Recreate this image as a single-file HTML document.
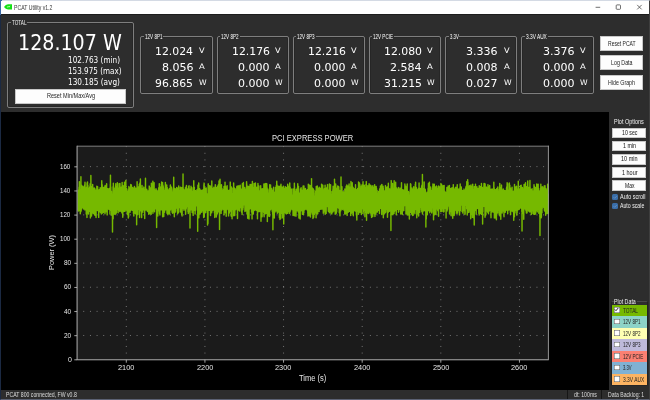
<!DOCTYPE html><html><head><meta charset="utf-8"><title>PCAT Utility v1.2</title><style>
html,body{margin:0;padding:0;}
body{width:650px;height:400px;background:#000;position:relative;overflow:hidden;font-family:"Liberation Sans", sans-serif;}
#app{position:absolute;left:0;top:0;width:650px;height:400px;will-change:transform;}
.abs{position:absolute;display:block}
.titlebar{position:absolute;left:0;top:0;width:650px;height:14px;background:#fff;}
.toppanel{position:absolute;left:0;top:14px;width:650px;height:98.2px;background:#2d2d2d;border-top:1px solid #1c1c1c;box-sizing:border-box}
.rightpanel{position:absolute;left:609.3px;top:112px;width:41px;height:277.5px;background:#2d2d2d;}
.status{position:absolute;left:0;top:390.4px;width:650px;height:9.6px;background:#2d2d2d;}
.sdiv{position:absolute;top:390.4px;width:1px;height:8.4px;background:#161616}
.gb{position:absolute;box-sizing:border-box;border:1px solid #7e7e7e;border-radius:2px;box-shadow:inset 0 0 0 0.6px #222;}
.gb2{border-color:#4a4a4a #222 #262626 #222;box-shadow:none}
.gbl{position:absolute;background:#2d2d2d;}
.btn{position:absolute;box-sizing:border-box;background:#fdfdfd;border:0.5px solid #c8c8c8;}
.btn.sm{}
.cb{position:absolute;width:6.5px;height:6.2px;border-radius:1.5px;background:#3a6ea8;}
.row{position:absolute;left:612.4px;width:34.7px;height:11.55px;}
.ck{position:absolute;left:2px;top:2.7px;width:5.5px;height:5.5px;background:#fff;box-shadow:inset 0 0 0 0.5px #555}
.ck svg{position:absolute;left:0;top:0}
.t{position:absolute;white-space:pre;line-height:1;transform-origin:0 0;}
.frame{position:absolute;left:0;top:0;width:650px;height:400px;box-sizing:border-box;border-left:1px solid #1b2942;border-top:1px solid #d4dae4;border-right:1px solid #3e3e3e;border-bottom:1.5px solid #5c6274;pointer-events:none}
.frame:before{content:'';position:absolute;left:-1px;top:-1px;width:1px;height:15px;background:#3a68a6}
.frame:after{content:'';position:absolute;left:-1px;top:-1px;width:2.2px;height:2.2px;background:linear-gradient(135deg,#3a68a6 50%,transparent 50%)}
</style></head><body><div id="app">
<div class="titlebar"></div>
<svg class="abs" style="left:3px;top:3px" width="10" height="8" viewBox="3 3 10 8"><path d="M4 6.9 Q5.6 4.5 8 4.3 L12 4.3 L12 9.5 L8 9.5 Q5.6 9.2 4 6.9 Z" fill="#14e014"/><path d="M6.6 6.9 Q7.8 5.8 9.3 6.8 Q8 8.1 6.6 6.9Z M8.4 6.2 L10.3 5.7 L9.6 7.4Z" fill="#c8ffc0" opacity=".85"/></svg>
<svg class="abs" style="left:590px;top:1px" width="58" height="13" viewBox="0 0 58 13"><path d="M5.6 6.3 H10.2" stroke="#333" stroke-width="0.7" fill="none"/><rect x="26.2" y="3.9" width="4.3" height="4.4" rx="0.8" stroke="#333" stroke-width="0.7" fill="none"/><path d="M47.2 3.9 L51.7 8.4 M51.7 3.9 L47.2 8.4" stroke="#333" stroke-width="0.7" fill="none"/></svg>
<div class="toppanel"></div>
<div class="gb" style="left:7px;top:22px;width:127.25px;height:85.5px"></div>
<div class="gbl" style="left:10.5px;top:19px;width:16.5px;height:7px"></div>
<div class="btn" style="left:15px;top:88.5px;width:111px;height:15px"></div>
<div class="gb" style="left:140.40px;top:36.0px;width:72.4px;height:57.5px"></div>
<div class="gbl" style="left:143.90px;top:33px;width:19.5px;height:7px"></div>
<div class="gb" style="left:216.57px;top:36.0px;width:72.4px;height:57.5px"></div>
<div class="gbl" style="left:220.07px;top:33px;width:19.5px;height:7px"></div>
<div class="gb" style="left:292.74px;top:36.0px;width:72.4px;height:57.5px"></div>
<div class="gbl" style="left:296.24px;top:33px;width:19.5px;height:7px"></div>
<div class="gb" style="left:368.91px;top:36.0px;width:72.4px;height:57.5px"></div>
<div class="gbl" style="left:372.41px;top:33px;width:22.0px;height:7px"></div>
<div class="gb" style="left:445.08px;top:36.0px;width:72.4px;height:57.5px"></div>
<div class="gbl" style="left:448.58px;top:33px;width:10.8px;height:7px"></div>
<div class="gb" style="left:521.25px;top:36.0px;width:72.4px;height:57.5px"></div>
<div class="gbl" style="left:524.75px;top:33px;width:22.8px;height:7px"></div>
<div class="btn" style="left:599.8px;top:35.8px;width:43.4px;height:15.1px"></div>
<div class="btn" style="left:599.8px;top:55.3px;width:43.4px;height:15.1px"></div>
<div class="btn" style="left:599.8px;top:74.8px;width:43.4px;height:15.1px"></div>
<svg class="abs" style="left:0;top:112px" width="609" height="278" viewBox="0 112 609 278"><rect x="77.6" y="146.7" width="471.1" height="213.60000000000002" fill="#1b1b1b"/><path d="M83.3 335.48 H547.7" stroke="#9a9a9a" stroke-width="0.8" stroke-dasharray="0.9 5.765" fill="none"/><path d="M83.3 311.36 H547.7" stroke="#9a9a9a" stroke-width="0.8" stroke-dasharray="0.9 5.765" fill="none"/><path d="M83.3 287.24 H547.7" stroke="#9a9a9a" stroke-width="0.8" stroke-dasharray="0.9 5.765" fill="none"/><path d="M83.3 263.12 H547.7" stroke="#9a9a9a" stroke-width="0.8" stroke-dasharray="0.9 5.765" fill="none"/><path d="M83.3 239.00 H547.7" stroke="#9a9a9a" stroke-width="0.8" stroke-dasharray="0.9 5.765" fill="none"/><path d="M83.3 214.88 H547.7" stroke="#9a9a9a" stroke-width="0.8" stroke-dasharray="0.9 5.765" fill="none"/><path d="M83.3 190.76 H547.7" stroke="#9a9a9a" stroke-width="0.8" stroke-dasharray="0.9 5.765" fill="none"/><path d="M83.3 166.64 H547.7" stroke="#9a9a9a" stroke-width="0.8" stroke-dasharray="0.9 5.765" fill="none"/><path d="M126.30 146.15 V359.3" stroke="#9a9a9a" stroke-width="0.8" stroke-dasharray="0.9 5.76" fill="none"/><path d="M204.93 146.15 V359.3" stroke="#9a9a9a" stroke-width="0.8" stroke-dasharray="0.9 5.76" fill="none"/><path d="M283.56 146.15 V359.3" stroke="#9a9a9a" stroke-width="0.8" stroke-dasharray="0.9 5.76" fill="none"/><path d="M362.19 146.15 V359.3" stroke="#9a9a9a" stroke-width="0.8" stroke-dasharray="0.9 5.76" fill="none"/><path d="M440.82 146.15 V359.3" stroke="#9a9a9a" stroke-width="0.8" stroke-dasharray="0.9 5.76" fill="none"/><path d="M519.45 146.15 V359.3" stroke="#9a9a9a" stroke-width="0.8" stroke-dasharray="0.9 5.76" fill="none"/><path d="M78.10 210.4L78.18 196.3L78.26 190.6L78.34 205.2L78.41 211.0L78.49 201.0L78.57 195.3L78.65 190.0L78.73 210.4L78.81 210.8L78.88 192.8L78.96 195.3L79.04 187.3L79.12 190.7L79.20 201.4L79.28 203.0L79.35 181.6L79.43 203.1L79.51 207.7L79.59 209.9L79.67 199.4L79.75 198.8L79.82 203.6L79.90 201.0L79.98 197.5L80.06 193.0L80.14 190.0L80.22 198.1L80.29 213.8L80.37 192.9L80.45 211.6L80.53 202.0L80.61 211.9L80.69 200.4L80.76 207.6L80.84 198.1L80.92 176.8L81.00 200.9L81.08 191.5L81.16 211.0L81.23 203.1L81.31 193.3L81.39 201.3L81.47 196.4L81.55 199.3L81.63 209.1L81.70 194.3L81.78 207.9L81.86 185.4L81.94 205.1L82.02 193.0L82.10 200.4L82.17 190.8L82.25 206.0L82.33 190.6L82.41 201.6L82.49 189.0L82.57 193.7L82.65 198.9L82.72 207.6L82.80 192.1L82.88 195.4L82.96 186.7L83.04 203.9L83.12 194.4L83.19 194.9L83.27 197.4L83.35 198.2L83.43 198.4L83.51 206.0L83.59 209.1L83.66 204.1L83.74 194.0L83.82 187.5L83.90 190.7L83.98 190.2L84.06 192.0L84.13 192.9L84.21 198.4L84.29 192.1L84.37 186.0L84.45 203.4L84.53 206.8L84.60 184.9L84.68 197.8L84.76 190.7L84.84 191.3L84.92 209.9L85.00 182.3L85.07 186.0L85.15 198.5L85.23 192.3L85.31 199.0L85.39 208.4L85.47 201.4L85.54 196.4L85.62 189.9L85.70 192.8L85.78 199.8L85.86 188.4L85.94 207.5L86.01 191.9L86.09 189.9L86.17 203.1L86.25 213.9L86.33 208.5L86.41 197.9L86.48 194.7L86.56 187.2L86.64 209.1L86.72 200.4L86.80 193.4L86.88 201.9L86.96 217.4L87.03 191.7L87.11 183.0L87.19 190.5L87.27 208.6L87.35 204.2L87.43 198.0L87.50 182.0L87.58 193.8L87.66 199.2L87.74 187.2L87.82 201.2L87.90 185.5L87.97 206.8L88.05 204.8L88.13 192.6L88.21 188.0L88.29 193.4L88.37 197.2L88.44 214.0L88.52 207.0L88.60 206.1L88.68 205.4L88.76 194.1L88.84 203.5L88.91 191.9L88.99 199.5L89.07 203.5L89.15 199.1L89.23 195.8L89.31 191.4L89.38 204.8L89.46 202.6L89.54 211.3L89.62 186.9L89.70 187.8L89.78 202.1L89.85 204.8L89.93 210.5L90.01 198.6L90.09 198.2L90.17 183.7L90.25 197.8L90.32 207.6L90.40 217.9L90.48 188.1L90.56 198.4L90.64 212.7L90.72 198.5L90.79 212.7L90.87 175.5L90.95 189.8L91.03 194.2L91.11 202.0L91.19 216.0L91.26 201.6L91.34 212.4L91.42 194.0L91.50 216.0L91.58 208.5L91.66 189.2L91.74 186.7L91.81 210.1L91.89 212.3L91.97 191.3L92.05 191.4L92.13 209.0L92.21 206.8L92.28 206.8L92.36 210.2L92.44 206.7L92.52 189.0L92.60 193.0L92.68 184.4L92.75 201.2L92.83 201.7L92.91 208.9L92.99 201.6L93.07 210.9L93.15 213.8L93.22 192.9L93.30 187.9L93.38 191.5L93.46 188.6L93.54 197.7L93.62 207.1L93.69 199.5L93.77 203.9L93.85 209.7L93.93 213.2L94.01 212.0L94.09 200.5L94.16 198.8L94.24 204.8L94.32 188.0L94.40 198.5L94.48 194.1L94.56 189.2L94.63 208.0L94.71 215.0L94.79 192.3L94.87 206.8L94.95 188.7L95.03 196.8L95.10 190.5L95.18 192.2L95.26 215.6L95.34 192.7L95.42 206.6L95.50 207.4L95.57 204.4L95.65 192.1L95.73 191.3L95.81 190.5L95.89 213.0L95.97 205.9L96.05 217.5L96.12 201.4L96.20 193.9L96.28 207.5L96.36 197.8L96.44 197.9L96.52 190.5L96.59 208.0L96.67 208.0L96.75 207.5L96.83 186.1L96.91 190.0L96.99 201.6L97.06 198.0L97.14 199.2L97.22 198.2L97.30 202.3L97.38 203.5L97.46 210.6L97.53 206.4L97.61 186.6L97.69 194.6L97.77 199.7L97.85 202.4L97.93 199.7L98.00 196.6L98.08 206.4L98.16 198.3L98.24 197.8L98.32 207.3L98.40 207.7L98.47 209.0L98.55 209.4L98.63 191.2L98.71 217.4L98.79 202.9L98.87 206.1L98.94 206.2L99.02 199.4L99.10 189.8L99.18 199.6L99.26 201.7L99.34 206.1L99.41 201.6L99.49 191.1L99.57 204.1L99.65 209.9L99.73 210.7L99.81 209.7L99.88 211.4L99.96 190.0L100.04 196.6L100.12 202.6L100.20 187.8L100.28 206.5L100.36 192.3L100.43 191.8L100.51 212.4L100.59 212.4L100.67 208.6L100.75 191.1L100.83 188.8L100.90 210.4L100.98 190.3L101.06 204.0L101.14 204.1L101.22 205.5L101.30 203.4L101.37 214.0L101.45 209.1L101.53 210.5L101.61 195.1L101.69 184.2L101.77 180.7L101.84 203.5L101.92 213.4L102.00 204.2L102.08 208.7L102.16 184.8L102.24 194.3L102.31 207.2L102.39 190.9L102.47 194.6L102.55 212.8L102.63 205.3L102.71 202.6L102.78 200.2L102.86 199.0L102.94 203.6L103.02 198.4L103.10 205.8L103.18 208.4L103.25 187.4L103.33 196.5L103.41 195.7L103.49 212.6L103.57 201.9L103.65 191.6L103.72 210.8L103.80 190.0L103.88 204.0L103.96 196.1L104.04 201.6L104.12 198.1L104.19 189.3L104.27 204.1L104.35 187.2L104.43 207.7L104.51 208.6L104.59 192.8L104.67 209.5L104.74 203.8L104.82 191.1L104.90 189.3L104.98 213.8L105.06 195.0L105.14 185.4L105.21 189.4L105.29 202.6L105.37 206.0L105.45 203.2L105.53 210.0L105.61 202.9L105.68 202.1L105.76 201.8L105.84 189.5L105.92 202.5L106.00 211.8L106.08 190.2L106.15 209.5L106.23 204.6L106.31 201.6L106.39 203.6L106.47 209.1L106.55 202.7L106.62 183.7L106.70 206.0L106.78 201.7L106.86 189.8L106.94 192.4L107.02 192.2L107.09 191.4L107.17 214.9L107.25 208.2L107.33 199.0L107.41 195.0L107.49 188.8L107.56 195.4L107.64 202.6L107.72 200.0L107.80 202.4L107.88 197.7L107.96 193.1L108.03 203.6L108.11 207.9L108.19 208.2L108.27 190.0L108.35 188.9L108.43 190.6L108.50 191.4L108.58 191.6L108.66 200.4L108.74 193.3L108.82 209.4L108.90 202.3L108.98 207.2L109.05 192.6L109.13 205.8L109.21 201.4L109.29 196.1L109.37 188.4L109.45 207.8L109.52 208.7L109.60 191.7L109.68 209.7L109.76 195.5L109.84 205.7L109.92 201.4L109.99 214.0L110.07 192.7L110.15 205.0L110.23 208.4L110.31 184.3L110.39 192.7L110.46 175.3L110.54 196.0L110.62 203.6L110.70 199.2L110.78 186.9L110.86 200.7L110.93 195.6L111.01 194.8L111.09 208.5L111.17 199.0L111.25 205.1L111.33 210.5L111.40 191.3L111.48 193.2L111.56 199.6L111.64 208.5L111.72 215.2L111.80 195.2L111.87 201.3L111.95 213.2L112.03 201.0L112.11 212.2L112.19 200.7L112.27 198.9L112.34 196.6L112.42 198.1L112.50 232.0L112.58 209.9L112.66 204.0L112.74 205.1L112.81 202.6L112.89 197.5L112.97 193.7L113.05 186.7L113.13 218.7L113.21 196.1L113.29 202.2L113.36 183.2L113.44 191.0L113.52 213.0L113.60 196.1L113.68 205.2L113.76 190.6L113.83 209.4L113.91 201.4L113.99 201.6L114.07 201.3L114.15 205.8L114.23 214.1L114.30 195.5L114.38 190.6L114.46 201.0L114.54 209.2L114.62 198.2L114.70 194.3L114.77 202.0L114.85 200.5L114.93 188.1L115.01 209.8L115.09 205.6L115.17 214.6L115.24 206.9L115.32 207.3L115.40 208.8L115.48 206.8L115.56 185.8L115.64 202.2L115.71 201.5L115.79 183.6L115.87 201.0L115.95 213.5L116.03 196.1L116.11 208.7L116.18 186.7L116.26 210.5L116.34 205.8L116.42 212.7L116.50 199.4L116.58 209.1L116.65 201.0L116.73 203.9L116.81 206.1L116.89 190.9L116.97 190.9L117.05 199.7L117.12 208.5L117.20 209.5L117.28 197.5L117.36 182.6L117.44 204.6L117.52 207.7L117.59 206.9L117.67 209.6L117.75 208.9L117.83 202.3L117.91 187.9L117.99 200.4L118.07 205.1L118.14 212.8L118.22 198.1L118.30 200.7L118.38 210.4L118.46 209.6L118.54 200.8L118.61 190.5L118.69 193.7L118.77 198.2L118.85 203.4L118.93 197.0L119.01 200.5L119.08 183.8L119.16 209.9L119.24 203.8L119.32 188.9L119.40 202.9L119.48 188.0L119.55 200.8L119.63 198.8L119.71 203.8L119.79 211.4L119.87 208.9L119.95 183.5L120.02 193.5L120.10 193.9L120.18 190.8L120.26 194.3L120.34 190.4L120.42 202.9L120.49 202.5L120.57 190.7L120.65 203.7L120.73 211.1L120.81 202.5L120.89 205.5L120.96 193.8L121.04 207.1L121.12 209.4L121.20 203.5L121.28 187.2L121.36 200.9L121.43 198.7L121.51 200.3L121.59 197.2L121.67 191.0L121.75 188.2L121.83 212.9L121.90 188.4L121.98 200.4L122.06 203.4L122.14 182.5L122.22 202.0L122.30 185.0L122.38 190.7L122.45 209.2L122.53 195.1L122.61 192.5L122.69 201.6L122.77 217.2L122.85 203.6L122.92 202.2L123.00 209.7L123.08 185.7L123.16 202.7L123.24 204.1L123.32 203.2L123.39 207.7L123.47 207.6L123.55 199.4L123.63 197.0L123.71 205.1L123.79 201.2L123.86 211.4L123.94 194.8L124.02 207.4L124.10 198.1L124.18 208.5L124.26 205.2L124.33 198.1L124.41 210.3L124.49 182.1L124.57 200.7L124.65 201.1L124.73 207.2L124.80 187.0L124.88 188.2L124.96 197.2L125.04 211.3L125.12 205.1L125.20 193.8L125.27 205.2L125.35 210.2L125.43 210.2L125.51 207.6L125.59 200.3L125.67 206.4L125.74 200.2L125.82 180.4L125.90 186.0L125.98 209.3L126.06 196.7L126.14 199.5L126.21 201.7L126.29 190.3L126.37 203.5L126.45 203.4L126.53 203.9L126.61 201.3L126.69 188.8L126.76 192.1L126.84 211.1L126.92 204.5L127.00 207.8L127.08 191.7L127.16 198.0L127.23 191.2L127.31 201.0L127.39 214.6L127.47 195.6L127.55 198.0L127.63 194.9L127.70 210.9L127.78 199.5L127.86 206.8L127.94 206.8L128.02 196.6L128.10 196.6L128.17 208.4L128.25 213.4L128.33 218.1L128.41 205.7L128.49 189.8L128.57 200.9L128.64 216.7L128.72 208.2L128.80 195.9L128.88 186.5L128.96 189.5L129.04 196.5L129.11 198.3L129.19 209.4L129.27 204.6L129.35 203.5L129.43 207.6L129.51 199.7L129.58 204.0L129.66 196.8L129.74 187.9L129.82 192.4L129.90 195.9L129.98 202.6L130.05 212.2L130.13 201.5L130.21 194.6L130.29 209.1L130.37 189.0L130.45 203.5L130.52 196.4L130.60 203.5L130.68 210.6L130.76 184.4L130.84 210.0L130.92 191.0L131.00 205.6L131.07 197.4L131.15 207.9L131.23 204.3L131.31 191.0L131.39 185.0L131.47 208.1L131.54 200.3L131.62 190.9L131.70 206.3L131.78 192.8L131.86 207.7L131.94 193.9L132.01 195.7L132.09 189.3L132.17 196.5L132.25 210.2L132.33 193.3L132.41 209.7L132.48 192.3L132.56 187.5L132.64 194.0L132.72 205.5L132.80 189.4L132.88 198.6L132.95 210.5L133.03 203.7L133.11 188.0L133.19 203.2L133.27 199.1L133.35 203.6L133.42 213.2L133.50 205.1L133.58 196.6L133.66 198.2L133.74 202.0L133.82 216.0L133.89 189.2L133.97 192.7L134.05 190.4L134.13 188.7L134.21 204.5L134.29 206.0L134.36 197.0L134.44 186.5L134.52 213.2L134.60 202.5L134.68 207.0L134.76 194.4L134.83 187.8L134.91 203.2L134.99 210.5L135.07 199.9L135.15 203.1L135.23 212.3L135.31 191.3L135.38 205.3L135.46 193.1L135.54 211.0L135.62 190.0L135.70 211.7L135.78 190.2L135.85 214.0L135.93 188.3L136.01 203.9L136.09 212.4L136.17 202.6L136.25 196.8L136.32 209.0L136.40 205.0L136.48 197.5L136.56 202.0L136.64 224.7L136.72 204.4L136.79 195.8L136.87 197.2L136.95 190.5L137.03 206.8L137.11 181.7L137.19 191.8L137.26 197.0L137.34 190.0L137.42 190.8L137.50 199.3L137.58 206.2L137.66 190.4L137.73 195.9L137.81 214.5L137.89 209.7L137.97 195.4L138.05 199.2L138.13 197.4L138.20 193.5L138.28 198.8L138.36 187.0L138.44 205.9L138.52 204.1L138.60 196.9L138.67 192.4L138.75 191.9L138.83 187.6L138.91 204.8L138.99 189.5L139.07 195.4L139.14 209.3L139.22 201.7L139.30 184.3L139.38 192.0L139.46 204.8L139.54 217.6L139.62 207.2L139.69 206.9L139.77 199.6L139.85 183.0L139.93 192.4L140.01 197.0L140.09 208.7L140.16 210.2L140.24 202.3L140.32 204.7L140.40 178.9L140.48 204.2L140.56 206.1L140.63 189.8L140.71 199.6L140.79 210.5L140.87 188.8L140.95 203.3L141.03 211.0L141.10 196.9L141.18 195.2L141.26 203.5L141.34 192.9L141.42 191.6L141.50 208.3L141.57 215.5L141.65 217.6L141.73 201.6L141.81 189.2L141.89 190.5L141.97 188.2L142.04 185.5L142.12 200.2L142.20 190.2L142.28 212.3L142.36 193.0L142.44 196.2L142.51 201.3L142.59 204.5L142.67 209.8L142.75 198.9L142.83 188.9L142.91 203.8L142.98 194.7L143.06 206.6L143.14 197.7L143.22 209.1L143.30 196.3L143.38 202.4L143.45 197.0L143.53 206.0L143.61 210.1L143.69 203.5L143.77 190.3L143.85 187.1L143.92 203.4L144.00 191.8L144.08 192.2L144.16 196.2L144.24 212.4L144.32 196.9L144.40 208.9L144.47 189.5L144.55 191.9L144.63 193.8L144.71 218.5L144.79 193.7L144.87 192.9L144.94 210.7L145.02 190.7L145.10 199.6L145.18 202.1L145.26 207.0L145.34 209.2L145.41 204.4L145.49 178.3L145.57 198.2L145.65 198.2L145.73 206.4L145.81 206.1L145.88 205.5L145.96 208.4L146.04 191.3L146.12 202.9L146.20 191.4L146.28 210.0L146.35 191.0L146.43 200.7L146.51 193.2L146.59 201.4L146.67 208.4L146.75 189.3L146.82 204.4L146.90 201.8L146.98 208.4L147.06 198.2L147.14 204.0L147.22 197.4L147.29 196.7L147.37 206.8L147.45 211.5L147.53 195.7L147.61 191.1L147.69 192.9L147.76 209.9L147.84 193.9L147.92 196.3L148.00 197.4L148.08 195.8L148.16 203.4L148.23 198.1L148.31 191.0L148.39 205.1L148.47 211.7L148.55 201.4L148.63 198.3L148.71 214.2L148.78 206.7L148.86 194.1L148.94 201.8L149.02 199.4L149.10 210.6L149.18 191.1L149.25 186.1L149.33 202.3L149.41 207.2L149.49 210.0L149.57 191.2L149.65 199.3L149.72 207.8L149.80 189.3L149.88 192.2L149.96 193.9L150.04 213.7L150.12 201.4L150.19 193.7L150.27 210.4L150.35 191.0L150.43 188.0L150.51 190.4L150.59 207.1L150.66 207.0L150.74 190.9L150.82 190.6L150.90 189.2L150.98 189.3L151.06 201.3L151.13 204.2L151.21 214.3L151.29 192.0L151.37 183.2L151.45 204.7L151.53 204.8L151.60 193.4L151.68 196.4L151.76 211.3L151.84 207.0L151.92 209.6L152.00 184.6L152.07 207.1L152.15 191.4L152.23 185.2L152.31 185.3L152.39 188.0L152.47 186.8L152.54 210.5L152.62 203.6L152.70 207.2L152.78 203.1L152.86 181.3L152.94 213.2L153.02 194.4L153.09 210.5L153.17 188.5L153.25 188.7L153.33 205.2L153.41 184.3L153.49 199.6L153.56 188.7L153.64 197.1L153.72 205.6L153.80 203.9L153.88 201.5L153.96 193.8L154.03 199.1L154.11 182.7L154.19 202.2L154.27 204.7L154.35 207.1L154.43 207.6L154.50 211.7L154.58 209.0L154.66 191.1L154.74 199.8L154.82 202.0L154.90 196.6L154.97 190.1L155.05 193.8L155.13 192.1L155.21 205.6L155.29 202.8L155.37 207.6L155.44 201.3L155.52 208.0L155.60 203.9L155.68 202.0L155.76 202.4L155.84 202.9L155.91 205.0L155.99 188.7L156.07 203.6L156.15 209.1L156.23 198.3L156.31 209.6L156.38 209.5L156.46 199.5L156.54 213.1L156.62 227.6L156.70 197.3L156.78 190.3L156.85 213.1L156.93 208.4L157.01 194.2L157.09 215.1L157.17 208.3L157.25 210.3L157.33 202.2L157.40 215.0L157.48 191.2L157.56 201.7L157.64 197.1L157.72 203.4L157.80 215.9L157.87 201.8L157.95 211.1L158.03 200.3L158.11 208.2L158.19 203.3L158.27 202.4L158.34 192.1L158.42 192.1L158.50 209.1L158.58 200.6L158.66 187.8L158.74 195.1L158.81 207.2L158.89 201.5L158.97 203.6L159.05 190.9L159.13 200.0L159.21 196.4L159.28 183.6L159.36 211.3L159.44 209.1L159.52 213.5L159.60 212.6L159.68 191.4L159.75 197.3L159.83 186.8L159.91 215.0L159.99 208.3L160.07 187.9L160.15 190.4L160.22 191.3L160.30 191.3L160.38 200.1L160.46 200.5L160.54 200.1L160.62 191.5L160.69 201.9L160.77 197.0L160.85 187.8L160.93 209.8L161.01 207.4L161.09 194.3L161.16 202.8L161.24 201.9L161.32 184.2L161.40 195.9L161.48 204.3L161.56 190.0L161.64 181.9L161.71 209.7L161.79 206.6L161.87 199.2L161.95 206.3L162.03 183.8L162.11 194.7L162.18 204.1L162.26 195.1L162.34 207.8L162.42 206.0L162.50 199.3L162.58 182.6L162.65 216.7L162.73 195.9L162.81 188.4L162.89 192.4L162.97 185.2L163.05 195.6L163.12 198.8L163.20 201.6L163.28 208.2L163.36 186.7L163.44 210.2L163.52 201.6L163.59 205.3L163.67 207.7L163.75 216.5L163.83 203.9L163.91 198.9L163.99 198.9L164.06 191.5L164.14 201.9L164.22 206.4L164.30 197.1L164.38 193.2L164.46 208.5L164.53 212.2L164.61 209.2L164.69 190.2L164.77 190.6L164.85 208.4L164.93 199.2L165.00 191.5L165.08 188.6L165.16 206.5L165.24 202.6L165.32 188.1L165.40 182.5L165.47 187.4L165.55 209.9L165.63 195.6L165.71 203.2L165.79 201.0L165.87 206.6L165.94 204.9L166.02 200.5L166.10 185.8L166.18 192.9L166.26 195.8L166.34 200.1L166.42 207.4L166.49 202.5L166.57 189.1L166.65 191.6L166.73 184.9L166.81 197.6L166.89 200.6L166.96 212.8L167.04 196.1L167.12 213.4L167.20 187.4L167.28 206.2L167.36 200.4L167.43 211.2L167.51 205.0L167.59 208.6L167.67 189.8L167.75 197.7L167.83 210.1L167.90 214.7L167.98 201.0L168.06 204.9L168.14 209.7L168.22 194.1L168.30 202.1L168.37 199.2L168.45 205.9L168.53 205.7L168.61 204.7L168.69 212.7L168.77 193.6L168.84 196.1L168.92 213.4L169.00 199.3L169.08 189.6L169.16 197.9L169.24 188.8L169.31 202.9L169.39 200.4L169.47 210.9L169.55 208.5L169.63 214.1L169.71 208.4L169.78 197.8L169.86 194.8L169.94 189.6L170.02 199.0L170.10 209.0L170.18 195.8L170.25 201.8L170.33 185.9L170.41 185.0L170.49 190.8L170.57 209.9L170.65 205.3L170.73 198.4L170.80 207.0L170.88 194.8L170.96 193.0L171.04 191.5L171.12 197.9L171.20 208.4L171.27 208.1L171.35 201.5L171.43 188.6L171.51 187.1L171.59 190.7L171.67 196.5L171.74 193.1L171.82 191.6L171.90 188.8L171.98 191.4L172.06 212.3L172.14 190.8L172.21 196.3L172.29 204.7L172.37 194.8L172.45 197.3L172.53 200.9L172.61 213.2L172.68 199.2L172.76 194.4L172.84 200.9L172.92 212.6L173.00 195.5L173.08 192.7L173.15 198.5L173.23 195.8L173.31 203.7L173.39 206.5L173.47 194.8L173.55 203.7L173.62 198.4L173.70 177.1L173.78 192.7L173.86 198.9L173.94 212.8L174.02 199.4L174.09 192.2L174.17 206.9L174.25 202.6L174.33 216.7L174.41 194.4L174.49 205.9L174.56 193.0L174.64 188.4L174.72 201.9L174.80 190.7L174.88 197.7L174.96 202.3L175.04 203.0L175.11 208.2L175.19 188.8L175.27 191.3L175.35 209.1L175.43 191.5L175.51 207.2L175.58 212.1L175.66 189.4L175.74 210.7L175.82 189.4L175.90 198.3L175.98 191.1L176.05 194.9L176.13 189.6L176.21 196.7L176.29 194.2L176.37 197.7L176.45 190.0L176.52 204.0L176.60 190.5L176.68 187.5L176.76 201.0L176.84 195.7L176.92 205.2L176.99 203.1L177.07 197.6L177.15 203.6L177.23 208.4L177.31 200.7L177.39 198.3L177.46 196.9L177.54 192.8L177.62 213.7L177.70 188.1L177.78 202.0L177.86 207.6L177.93 203.8L178.01 195.6L178.09 191.3L178.17 203.8L178.25 198.7L178.33 212.7L178.40 198.6L178.48 201.4L178.56 204.4L178.64 191.2L178.72 185.9L178.80 190.4L178.87 207.7L178.95 187.4L179.03 203.5L179.11 200.8L179.19 205.8L179.27 195.5L179.35 194.5L179.42 198.8L179.50 202.4L179.58 201.7L179.66 204.1L179.74 190.7L179.82 205.2L179.89 201.8L179.97 202.3L180.05 207.3L180.13 202.5L180.21 211.9L180.29 196.0L180.36 194.6L180.44 203.2L180.52 187.2L180.60 208.0L180.68 194.4L180.76 195.3L180.83 205.4L180.91 202.6L180.99 191.2L181.07 199.7L181.15 197.4L181.23 188.2L181.30 198.1L181.38 213.1L181.46 207.2L181.54 191.6L181.62 201.6L181.70 209.5L181.77 215.0L181.85 196.9L181.93 187.6L182.01 210.5L182.09 216.1L182.17 195.1L182.24 205.4L182.32 203.1L182.40 203.4L182.48 208.4L182.56 195.7L182.64 191.1L182.71 196.5L182.79 205.5L182.87 190.4L182.95 201.4L183.03 174.0L183.11 208.6L183.18 193.4L183.26 192.4L183.34 188.9L183.42 200.1L183.50 195.7L183.58 205.7L183.66 191.3L183.73 192.1L183.81 190.1L183.89 203.9L183.97 210.3L184.05 201.0L184.13 202.3L184.20 207.3L184.28 193.9L184.36 190.9L184.44 196.2L184.52 189.9L184.60 196.2L184.67 208.8L184.75 205.8L184.83 203.6L184.91 193.1L184.99 191.1L185.07 198.9L185.14 190.5L185.22 207.9L185.30 201.4L185.38 187.7L185.46 195.7L185.54 190.3L185.61 214.3L185.69 213.0L185.77 208.2L185.85 190.6L185.93 186.9L186.01 206.1L186.08 208.9L186.16 209.0L186.24 208.3L186.32 194.5L186.40 203.3L186.48 185.5L186.55 192.7L186.63 206.6L186.71 197.9L186.79 201.8L186.87 192.0L186.95 191.2L187.02 203.6L187.10 191.3L187.18 194.3L187.26 201.2L187.34 197.7L187.42 193.2L187.49 203.3L187.57 206.5L187.65 189.0L187.73 200.3L187.81 205.8L187.89 195.5L187.97 211.8L188.04 199.8L188.12 211.1L188.20 204.3L188.28 213.6L188.36 206.9L188.44 191.3L188.51 202.0L188.59 210.2L188.67 186.3L188.75 206.1L188.83 187.8L188.91 205.2L188.98 211.7L189.06 185.7L189.14 204.3L189.22 192.3L189.30 189.5L189.38 210.8L189.45 199.6L189.53 205.6L189.61 194.0L189.69 200.5L189.77 210.5L189.85 199.7L189.92 192.3L190.00 228.1L190.08 194.4L190.16 205.2L190.24 200.8L190.32 196.7L190.39 198.8L190.47 189.0L190.55 190.9L190.63 191.6L190.71 192.7L190.79 198.7L190.86 209.9L190.94 190.3L191.02 186.3L191.10 198.0L191.18 202.7L191.26 200.7L191.33 189.4L191.41 197.3L191.49 208.8L191.57 201.9L191.65 207.3L191.73 202.2L191.80 208.3L191.88 208.1L191.96 187.8L192.04 190.4L192.12 212.5L192.20 208.8L192.27 204.4L192.35 203.9L192.43 211.1L192.51 191.3L192.59 212.5L192.67 193.0L192.75 193.0L192.82 203.7L192.90 206.3L192.98 199.7L193.06 198.8L193.14 215.4L193.22 210.4L193.29 194.7L193.37 201.3L193.45 204.1L193.53 208.8L193.61 206.7L193.69 207.3L193.76 180.7L193.84 210.4L193.92 187.5L194.00 195.3L194.08 198.1L194.16 198.3L194.23 203.8L194.31 187.1L194.39 195.0L194.47 200.6L194.55 201.4L194.63 198.2L194.70 209.7L194.78 203.2L194.86 206.0L194.94 193.8L195.02 194.0L195.10 214.0L195.17 202.4L195.25 190.7L195.33 210.6L195.41 209.9L195.49 190.6L195.57 201.5L195.64 204.4L195.72 210.1L195.80 198.5L195.88 205.4L195.96 198.1L196.04 195.8L196.11 192.9L196.19 203.3L196.27 205.1L196.35 200.0L196.43 201.2L196.51 198.5L196.58 205.1L196.66 202.5L196.74 205.6L196.82 205.7L196.90 198.7L196.98 189.7L197.06 205.2L197.13 194.2L197.21 196.7L197.29 199.2L197.37 193.2L197.45 205.4L197.53 194.4L197.60 197.2L197.68 231.2L197.76 196.6L197.84 194.0L197.92 185.2L198.00 209.2L198.07 199.3L198.15 196.6L198.23 208.7L198.31 189.5L198.39 195.6L198.47 207.6L198.54 210.0L198.62 204.1L198.70 182.9L198.78 184.1L198.86 217.7L198.94 213.8L199.01 193.3L199.09 201.3L199.17 206.1L199.25 194.0L199.33 199.3L199.41 197.3L199.48 197.5L199.56 209.4L199.64 188.8L199.72 204.5L199.80 189.8L199.88 193.0L199.95 199.9L200.03 198.9L200.11 200.8L200.19 213.9L200.27 203.3L200.35 195.8L200.42 212.5L200.50 211.8L200.58 190.2L200.66 191.8L200.74 212.1L200.82 195.5L200.89 200.8L200.97 190.8L201.05 203.3L201.13 202.4L201.21 207.2L201.29 198.4L201.37 201.5L201.44 206.3L201.52 203.5L201.60 207.2L201.68 193.7L201.76 209.1L201.84 212.2L201.91 208.7L201.99 190.1L202.07 205.0L202.15 193.5L202.23 192.6L202.31 205.0L202.38 192.3L202.46 195.0L202.54 200.7L202.62 206.8L202.70 200.9L202.78 210.6L202.85 202.9L202.93 205.7L203.01 195.7L203.09 196.7L203.17 206.2L203.25 191.4L203.32 189.5L203.40 199.7L203.48 207.1L203.56 195.0L203.64 217.6L203.72 205.7L203.79 194.2L203.87 184.8L203.95 207.1L204.03 187.5L204.11 183.1L204.19 185.5L204.26 217.1L204.34 190.0L204.42 198.3L204.50 190.5L204.58 202.0L204.66 206.0L204.73 202.4L204.81 187.6L204.89 191.6L204.97 203.0L205.05 196.3L205.13 191.4L205.20 194.3L205.28 200.8L205.36 206.4L205.44 207.2L205.52 204.4L205.60 205.4L205.68 212.4L205.75 211.4L205.83 191.3L205.91 209.7L205.99 210.8L206.07 200.8L206.15 187.9L206.22 189.0L206.30 204.2L206.38 209.2L206.46 205.3L206.54 208.4L206.62 205.4L206.69 195.2L206.77 209.4L206.85 207.6L206.93 202.8L207.01 200.6L207.09 207.4L207.16 207.6L207.24 209.8L207.32 207.3L207.40 194.8L207.48 202.6L207.56 225.1L207.63 193.8L207.71 201.0L207.79 208.2L207.87 202.7L207.95 223.6L208.03 212.9L208.10 189.6L208.18 184.0L208.26 183.8L208.34 207.2L208.42 200.0L208.50 192.0L208.57 210.4L208.65 186.2L208.73 207.1L208.81 196.6L208.89 209.9L208.97 196.5L209.04 200.5L209.12 190.1L209.20 210.0L209.28 200.5L209.36 185.7L209.44 210.2L209.51 196.6L209.59 195.7L209.67 205.0L209.75 202.9L209.83 188.1L209.91 189.7L209.99 194.3L210.06 197.5L210.14 209.8L210.22 199.4L210.30 185.9L210.38 190.2L210.46 211.2L210.53 215.6L210.61 206.5L210.69 198.6L210.77 205.5L210.85 203.2L210.93 196.7L211.00 191.2L211.08 198.1L211.16 189.0L211.24 211.6L211.32 195.4L211.40 195.8L211.47 212.0L211.55 189.0L211.63 212.7L211.71 211.7L211.79 181.0L211.87 188.8L211.94 196.3L212.02 188.4L212.10 189.6L212.18 209.8L212.26 195.2L212.34 188.1L212.41 201.9L212.49 199.6L212.57 204.7L212.65 192.5L212.73 205.5L212.81 205.9L212.88 210.4L212.96 208.6L213.04 198.0L213.12 195.3L213.20 204.0L213.28 209.4L213.35 196.7L213.43 196.5L213.51 188.9L213.59 205.0L213.67 204.2L213.75 194.9L213.82 187.3L213.90 200.9L213.98 201.2L214.06 208.7L214.14 203.9L214.22 190.8L214.29 191.4L214.37 189.8L214.45 213.0L214.53 191.5L214.61 208.6L214.69 194.0L214.77 217.5L214.84 201.3L214.92 208.4L215.00 188.9L215.08 199.1L215.16 188.7L215.24 204.5L215.31 184.8L215.39 204.5L215.47 185.2L215.55 204.9L215.63 209.0L215.71 191.1L215.78 204.1L215.86 200.9L215.94 211.2L216.02 203.6L216.10 199.2L216.18 207.0L216.25 196.1L216.33 217.1L216.41 191.1L216.49 204.2L216.57 187.6L216.65 203.7L216.72 206.5L216.80 204.6L216.88 197.4L216.96 193.9L217.04 204.7L217.12 207.9L217.19 195.7L217.27 191.5L217.35 213.7L217.43 209.4L217.51 206.7L217.59 186.2L217.66 189.1L217.74 191.7L217.82 195.0L217.90 209.8L217.98 189.7L218.06 204.5L218.13 207.8L218.21 185.0L218.29 211.9L218.37 188.1L218.45 198.2L218.53 208.6L218.60 198.4L218.68 208.2L218.76 198.4L218.84 206.4L218.92 210.3L219.00 180.9L219.08 205.1L219.15 190.5L219.23 200.8L219.31 193.0L219.39 210.7L219.47 209.4L219.55 229.4L219.62 190.4L219.70 195.5L219.78 210.2L219.86 191.5L219.94 193.9L220.02 179.2L220.09 197.8L220.17 191.0L220.25 193.7L220.33 192.0L220.41 200.6L220.49 204.3L220.56 192.6L220.64 189.0L220.72 210.1L220.80 210.0L220.88 200.8L220.96 185.7L221.03 202.3L221.11 213.4L221.19 191.6L221.27 192.1L221.35 184.9L221.43 198.3L221.50 184.7L221.58 207.1L221.66 191.0L221.74 198.9L221.82 210.3L221.90 203.0L221.97 188.4L222.05 189.7L222.13 203.9L222.21 189.8L222.29 191.0L222.37 191.1L222.44 197.2L222.52 197.0L222.60 208.0L222.68 201.0L222.76 199.0L222.84 207.3L222.91 203.1L222.99 198.6L223.07 198.0L223.15 190.1L223.23 209.3L223.31 204.1L223.39 197.4L223.46 203.9L223.54 196.7L223.62 204.8L223.70 189.4L223.78 202.5L223.86 209.9L223.93 192.2L224.01 186.4L224.09 214.8L224.17 201.6L224.25 199.6L224.33 190.3L224.40 187.4L224.48 201.8L224.56 212.5L224.64 193.1L224.72 190.4L224.80 195.3L224.87 199.5L224.95 207.9L225.03 182.1L225.11 210.3L225.19 212.2L225.27 190.6L225.34 197.2L225.42 193.0L225.50 196.5L225.58 186.3L225.66 187.9L225.74 205.5L225.81 190.4L225.89 210.2L225.97 213.4L226.05 189.2L226.13 204.4L226.21 216.2L226.28 200.5L226.36 206.6L226.44 194.8L226.52 200.9L226.60 207.6L226.68 207.0L226.75 192.0L226.83 208.6L226.91 198.9L226.99 209.0L227.07 195.4L227.15 185.8L227.22 194.1L227.30 189.7L227.38 195.4L227.46 208.8L227.54 203.2L227.62 199.6L227.70 195.6L227.77 206.0L227.85 193.7L227.93 207.1L228.01 199.6L228.09 200.4L228.17 210.0L228.24 190.4L228.32 199.8L228.40 199.2L228.48 200.6L228.56 215.9L228.64 211.5L228.71 208.4L228.79 190.5L228.87 205.7L228.95 193.7L229.03 209.3L229.11 208.1L229.18 204.7L229.26 190.1L229.34 213.1L229.42 202.0L229.50 195.9L229.58 198.9L229.65 200.5L229.73 191.9L229.81 197.2L229.89 209.1L229.97 193.4L230.05 207.7L230.12 203.5L230.20 187.7L230.28 182.1L230.36 187.7L230.44 195.7L230.52 207.6L230.59 207.5L230.67 186.4L230.75 196.7L230.83 211.4L230.91 187.0L230.99 194.0L231.06 188.5L231.14 195.9L231.22 216.2L231.30 207.2L231.38 201.7L231.46 201.9L231.53 187.3L231.61 206.6L231.69 201.3L231.77 200.9L231.85 201.2L231.93 209.3L232.01 210.4L232.08 218.8L232.16 196.7L232.24 202.2L232.32 198.1L232.40 209.4L232.48 200.3L232.55 208.9L232.63 209.1L232.71 196.7L232.79 193.4L232.87 194.0L232.95 200.8L233.02 204.0L233.10 188.1L233.18 189.0L233.26 206.3L233.34 209.6L233.42 196.3L233.49 196.9L233.57 208.5L233.65 183.0L233.73 215.8L233.81 208.1L233.89 197.7L233.96 190.5L234.04 214.3L234.12 204.4L234.20 187.8L234.28 188.0L234.36 202.7L234.43 199.9L234.51 208.4L234.59 196.1L234.67 209.4L234.75 215.4L234.83 212.2L234.90 199.7L234.98 211.0L235.06 189.8L235.14 188.7L235.22 190.5L235.30 193.2L235.37 189.7L235.45 197.5L235.53 191.3L235.61 195.3L235.69 191.8L235.77 209.2L235.84 206.5L235.92 209.1L236.00 191.5L236.08 194.9L236.16 207.7L236.24 209.0L236.32 205.7L236.39 191.3L236.47 201.4L236.55 202.6L236.63 206.8L236.71 201.5L236.79 186.8L236.86 206.8L236.94 203.7L237.02 186.3L237.10 192.5L237.18 209.9L237.26 189.9L237.33 210.7L237.41 194.3L237.49 218.5L237.57 209.0L237.65 191.0L237.73 205.9L237.80 207.1L237.88 199.8L237.96 200.3L238.04 204.7L238.12 206.7L238.20 185.7L238.27 187.5L238.35 196.8L238.43 210.0L238.51 205.3L238.59 203.1L238.67 195.1L238.74 186.8L238.82 205.2L238.90 198.7L238.98 204.4L239.06 198.8L239.14 206.8L239.21 196.2L239.29 189.5L239.37 204.0L239.45 203.4L239.53 199.1L239.61 211.0L239.68 185.7L239.76 211.1L239.84 203.7L239.92 208.3L240.00 187.4L240.08 204.9L240.15 205.1L240.23 185.2L240.31 201.5L240.39 207.6L240.47 200.4L240.55 198.2L240.62 207.3L240.70 202.1L240.78 202.3L240.86 192.5L240.94 192.0L241.02 191.5L241.10 201.5L241.17 191.7L241.25 202.3L241.33 189.5L241.41 195.9L241.49 204.3L241.57 189.1L241.64 212.2L241.72 208.9L241.80 207.8L241.88 201.6L241.96 210.4L242.04 210.3L242.11 214.5L242.19 199.1L242.27 207.5L242.35 183.6L242.43 191.9L242.51 209.9L242.58 188.5L242.66 199.2L242.74 190.0L242.82 209.7L242.90 189.5L242.98 189.9L243.05 204.2L243.13 208.1L243.21 203.9L243.29 197.5L243.37 182.4L243.45 185.7L243.52 187.4L243.60 202.4L243.68 203.4L243.76 196.3L243.84 202.9L243.92 204.7L243.99 202.3L244.07 191.4L244.15 201.0L244.23 197.7L244.31 202.8L244.39 202.2L244.46 203.4L244.54 188.9L244.62 197.8L244.70 187.5L244.78 201.9L244.86 190.1L244.93 211.4L245.01 204.1L245.09 200.9L245.17 206.2L245.25 201.4L245.33 208.6L245.41 201.9L245.48 206.6L245.56 200.4L245.64 203.1L245.72 209.0L245.80 204.1L245.88 200.0L245.95 210.7L246.03 199.3L246.11 189.0L246.19 202.5L246.27 194.4L246.35 193.6L246.42 207.8L246.50 188.5L246.58 181.8L246.66 209.2L246.74 183.8L246.82 206.9L246.89 187.7L246.97 214.0L247.05 189.6L247.13 198.8L247.21 210.8L247.29 208.0L247.36 209.3L247.44 208.4L247.52 196.2L247.60 202.0L247.68 218.3L247.76 203.2L247.83 195.3L247.91 199.4L247.99 186.3L248.07 214.2L248.15 197.7L248.23 200.0L248.30 192.5L248.38 211.1L248.46 210.9L248.54 201.9L248.62 199.5L248.70 214.0L248.77 196.4L248.85 200.4L248.93 192.4L249.01 219.0L249.09 194.9L249.17 208.4L249.24 204.8L249.32 191.9L249.40 186.3L249.48 198.7L249.56 201.4L249.64 188.6L249.72 208.4L249.79 201.8L249.87 205.1L249.95 208.9L250.03 198.2L250.11 184.4L250.19 197.6L250.26 194.9L250.34 200.6L250.42 189.7L250.50 198.4L250.58 208.3L250.66 199.3L250.73 187.8L250.81 201.1L250.89 189.3L250.97 201.0L251.05 184.5L251.13 197.3L251.20 193.2L251.28 203.0L251.36 191.5L251.44 202.5L251.52 212.0L251.60 197.0L251.67 210.3L251.75 187.6L251.83 191.7L251.91 200.1L251.99 192.9L252.07 218.9L252.14 187.2L252.22 206.4L252.30 193.1L252.38 181.5L252.46 212.8L252.54 204.2L252.61 196.6L252.69 195.8L252.77 213.2L252.85 208.6L252.93 187.5L253.01 206.0L253.08 194.3L253.16 211.3L253.24 208.5L253.32 214.1L253.40 197.4L253.48 189.5L253.55 199.3L253.63 202.9L253.71 197.7L253.79 195.3L253.87 203.0L253.95 194.3L254.03 184.9L254.10 183.4L254.18 205.7L254.26 210.6L254.34 185.1L254.42 190.6L254.50 189.2L254.57 193.8L254.65 202.4L254.73 190.6L254.81 189.7L254.89 189.4L254.97 209.6L255.04 190.3L255.12 203.6L255.20 203.7L255.28 196.5L255.36 203.6L255.44 182.9L255.51 194.2L255.59 197.4L255.67 202.1L255.75 197.6L255.83 202.5L255.91 194.0L255.98 191.3L256.06 191.4L256.14 210.6L256.22 203.4L256.30 199.4L256.38 210.4L256.45 196.2L256.53 201.7L256.61 199.7L256.69 196.2L256.77 206.1L256.85 187.1L256.92 190.2L257.00 205.4L257.08 195.3L257.16 192.3L257.24 207.4L257.32 203.6L257.39 192.7L257.47 218.8L257.55 211.0L257.63 196.7L257.71 193.6L257.79 208.6L257.86 191.3L257.94 183.4L258.02 198.0L258.10 200.7L258.18 199.5L258.26 209.1L258.34 194.3L258.41 198.4L258.49 192.2L258.57 187.9L258.65 199.9L258.73 198.3L258.81 196.8L258.88 186.0L258.96 211.8L259.04 200.3L259.12 206.2L259.20 198.9L259.28 191.5L259.35 199.5L259.43 192.3L259.51 198.2L259.59 206.9L259.67 206.5L259.75 211.3L259.82 197.9L259.90 204.0L259.98 191.4L260.06 190.7L260.14 208.3L260.22 209.5L260.29 193.7L260.37 208.3L260.45 198.0L260.53 193.7L260.61 203.9L260.69 185.8L260.76 207.5L260.84 195.7L260.92 204.1L261.00 221.2L261.08 201.9L261.16 201.8L261.23 194.0L261.31 201.5L261.39 207.1L261.47 205.1L261.55 203.1L261.63 192.1L261.70 202.9L261.78 189.0L261.86 191.3L261.94 207.2L262.02 190.3L262.10 216.8L262.17 200.0L262.25 208.9L262.33 201.2L262.41 189.5L262.49 200.3L262.57 201.9L262.65 188.8L262.72 207.4L262.80 208.0L262.88 190.6L262.96 193.6L263.04 211.6L263.12 198.6L263.19 191.8L263.27 201.8L263.35 204.1L263.43 198.8L263.51 198.0L263.59 206.9L263.66 191.4L263.74 212.5L263.82 201.0L263.90 183.9L263.98 209.4L264.06 200.7L264.13 216.8L264.21 208.0L264.29 209.9L264.37 199.6L264.45 204.9L264.53 185.5L264.60 208.5L264.68 200.6L264.76 197.9L264.84 193.3L264.92 191.1L265.00 212.4L265.07 183.6L265.15 203.2L265.23 207.0L265.31 212.9L265.39 204.4L265.47 213.7L265.54 198.3L265.62 205.9L265.70 196.8L265.78 207.6L265.86 199.5L265.94 183.4L266.01 189.4L266.09 198.6L266.17 208.9L266.25 187.7L266.33 213.2L266.41 211.5L266.48 188.7L266.56 205.9L266.64 188.4L266.72 194.1L266.80 183.7L266.88 185.8L266.95 194.0L267.03 206.2L267.11 193.9L267.19 188.0L267.27 198.8L267.35 221.5L267.43 203.8L267.50 203.8L267.58 200.9L267.66 203.6L267.74 189.6L267.82 210.6L267.90 195.6L267.97 215.0L268.05 216.2L268.13 209.1L268.21 207.3L268.29 208.4L268.37 206.9L268.44 193.7L268.52 194.1L268.60 199.5L268.68 198.2L268.76 206.8L268.84 209.0L268.91 211.6L268.99 204.2L269.07 209.9L269.15 203.4L269.23 192.5L269.31 194.4L269.38 188.5L269.46 208.6L269.54 216.4L269.62 209.7L269.70 184.7L269.78 192.8L269.85 204.5L269.93 188.6L270.01 204.2L270.09 186.5L270.17 204.1L270.25 204.2L270.32 192.9L270.40 209.9L270.48 201.9L270.56 185.0L270.64 195.7L270.72 209.7L270.79 202.7L270.87 200.6L270.95 207.4L271.03 196.0L271.11 189.0L271.19 199.9L271.26 191.2L271.34 197.2L271.42 198.9L271.50 207.4L271.58 190.8L271.66 188.4L271.74 204.6L271.81 208.3L271.89 194.8L271.97 199.3L272.05 189.8L272.13 195.1L272.21 201.6L272.28 211.4L272.36 193.7L272.44 199.3L272.52 210.7L272.60 212.0L272.68 214.1L272.75 193.7L272.83 204.5L272.91 229.7L272.99 208.3L273.07 206.3L273.15 201.4L273.22 200.0L273.30 203.6L273.38 192.4L273.46 190.4L273.54 202.5L273.62 187.1L273.69 201.6L273.77 208.3L273.85 198.8L273.93 211.7L274.01 203.2L274.09 209.4L274.16 204.4L274.24 198.3L274.32 218.0L274.40 196.2L274.48 197.6L274.56 202.4L274.63 192.7L274.71 196.7L274.79 203.8L274.87 209.1L274.95 192.5L275.03 192.2L275.10 212.0L275.18 207.2L275.26 210.2L275.34 191.6L275.42 205.8L275.50 210.6L275.57 187.5L275.65 195.5L275.73 197.9L275.81 197.8L275.89 202.1L275.97 200.1L276.05 191.2L276.12 195.7L276.20 204.7L276.28 199.4L276.36 185.4L276.44 205.6L276.52 211.0L276.59 199.2L276.67 210.0L276.75 181.3L276.83 193.7L276.91 194.1L276.99 196.5L277.06 184.9L277.14 209.2L277.22 200.9L277.30 213.2L277.38 189.1L277.46 201.2L277.53 186.0L277.61 203.0L277.69 209.4L277.77 207.0L277.85 191.8L277.93 208.0L278.00 197.7L278.08 207.2L278.16 207.1L278.24 205.7L278.32 186.8L278.40 209.6L278.47 197.0L278.55 191.8L278.63 207.4L278.71 212.2L278.79 187.5L278.87 186.2L278.94 202.8L279.02 210.4L279.10 191.4L279.18 200.9L279.26 208.1L279.34 204.1L279.41 217.7L279.49 208.0L279.57 210.5L279.65 211.1L279.73 194.2L279.81 197.6L279.88 186.4L279.96 219.6L280.04 206.7L280.12 208.2L280.20 188.6L280.28 190.4L280.36 199.2L280.43 199.6L280.51 207.6L280.59 205.4L280.67 204.7L280.75 218.6L280.83 185.3L280.90 192.6L280.98 184.3L281.06 189.2L281.14 195.2L281.22 191.6L281.30 213.4L281.37 209.3L281.45 191.5L281.53 204.1L281.61 213.0L281.69 200.7L281.77 211.0L281.84 200.6L281.92 187.2L282.00 210.0L282.08 204.8L282.16 194.6L282.24 200.8L282.31 198.6L282.39 208.3L282.47 203.7L282.55 217.8L282.63 202.2L282.71 188.9L282.78 210.0L282.86 202.3L282.94 192.9L283.02 189.3L283.10 189.6L283.18 208.5L283.25 204.5L283.33 186.1L283.41 205.0L283.49 197.5L283.57 208.3L283.65 206.8L283.72 223.9L283.80 205.7L283.88 216.7L283.96 209.3L284.04 209.1L284.12 188.5L284.19 192.3L284.27 196.3L284.35 205.5L284.43 211.7L284.51 195.4L284.59 208.2L284.67 201.7L284.74 191.0L284.82 202.4L284.90 200.9L284.98 209.2L285.06 190.3L285.14 194.9L285.21 192.9L285.29 186.8L285.37 213.1L285.45 200.4L285.53 193.7L285.61 197.0L285.68 197.3L285.76 195.6L285.84 212.5L285.92 201.4L286.00 189.6L286.08 201.2L286.15 202.5L286.23 191.6L286.31 213.9L286.39 196.4L286.47 187.5L286.55 203.0L286.62 208.2L286.70 194.9L286.78 204.9L286.86 208.2L286.94 198.9L287.02 213.3L287.09 193.4L287.17 210.5L287.25 205.8L287.33 192.8L287.41 200.9L287.49 197.9L287.56 188.3L287.64 187.5L287.72 184.2L287.80 205.8L287.88 191.1L287.96 213.3L288.03 191.9L288.11 188.8L288.19 207.5L288.27 195.6L288.35 191.6L288.43 202.2L288.50 206.6L288.58 187.5L288.66 211.3L288.74 198.9L288.82 190.9L288.90 198.1L288.97 187.1L289.05 187.7L289.13 195.6L289.21 186.0L289.29 192.5L289.37 210.7L289.45 203.7L289.52 197.7L289.60 198.6L289.68 213.6L289.76 183.0L289.84 212.7L289.92 210.1L289.99 195.8L290.07 198.5L290.15 187.3L290.23 198.2L290.31 196.6L290.39 192.7L290.46 207.5L290.54 211.1L290.62 205.0L290.70 190.5L290.78 203.3L290.86 189.1L290.93 205.8L291.01 192.4L291.09 200.3L291.17 191.6L291.25 200.5L291.33 198.5L291.40 205.0L291.48 189.1L291.56 200.9L291.64 195.2L291.72 193.5L291.80 208.6L291.87 208.2L291.95 201.0L292.03 188.9L292.11 209.6L292.19 209.4L292.27 209.2L292.34 204.3L292.42 209.7L292.50 208.1L292.58 194.9L292.66 209.8L292.74 200.7L292.81 210.3L292.89 202.5L292.97 194.9L293.05 215.5L293.13 200.0L293.21 198.2L293.28 201.2L293.36 197.8L293.44 196.1L293.52 211.1L293.60 201.7L293.68 193.6L293.76 188.8L293.83 211.5L293.91 206.2L293.99 211.5L294.07 200.8L294.15 209.7L294.23 209.1L294.30 192.2L294.38 183.3L294.46 215.8L294.54 186.7L294.62 208.7L294.70 193.2L294.77 196.8L294.85 189.2L294.93 202.5L295.01 208.2L295.09 201.2L295.17 192.0L295.24 208.6L295.32 196.1L295.40 200.6L295.48 198.6L295.56 200.5L295.64 194.0L295.71 191.8L295.79 203.3L295.87 203.9L295.95 216.3L296.03 208.5L296.11 212.4L296.18 193.2L296.26 209.7L296.34 207.1L296.42 194.8L296.50 190.6L296.58 189.3L296.65 208.3L296.73 198.0L296.81 190.2L296.89 208.3L296.97 202.7L297.05 210.6L297.12 206.6L297.20 192.9L297.28 199.6L297.36 204.0L297.44 205.8L297.52 187.4L297.59 192.4L297.67 210.7L297.75 183.8L297.83 204.4L297.91 202.0L297.99 205.1L298.07 205.9L298.14 193.6L298.22 211.9L298.30 200.2L298.38 203.6L298.46 186.1L298.54 196.3L298.61 195.8L298.69 194.8L298.77 194.1L298.85 199.2L298.93 218.1L299.01 195.9L299.08 203.5L299.16 192.9L299.24 197.2L299.32 205.6L299.40 208.5L299.48 209.3L299.55 197.5L299.63 201.5L299.71 208.5L299.79 203.9L299.87 196.7L299.95 206.7L300.02 201.7L300.10 206.2L300.18 219.0L300.26 199.5L300.34 199.9L300.42 191.7L300.49 188.7L300.57 207.3L300.65 194.1L300.73 197.6L300.81 199.7L300.89 191.6L300.96 191.3L301.04 210.8L301.12 187.7L301.20 202.2L301.28 206.7L301.36 207.0L301.43 202.6L301.51 209.9L301.59 190.0L301.67 195.9L301.75 208.6L301.83 191.6L301.90 198.0L301.98 199.6L302.06 190.8L302.14 201.4L302.22 202.9L302.30 195.1L302.38 214.2L302.45 210.4L302.53 195.0L302.61 190.2L302.69 213.3L302.77 200.4L302.85 206.7L302.92 203.1L303.00 194.0L303.08 187.6L303.16 186.0L303.24 190.9L303.32 193.6L303.39 199.0L303.47 214.5L303.55 196.2L303.63 210.3L303.71 209.8L303.79 199.2L303.86 212.7L303.94 186.0L304.02 194.0L304.10 196.6L304.18 195.3L304.26 197.9L304.33 199.8L304.41 192.9L304.49 206.8L304.57 197.6L304.65 198.7L304.73 192.1L304.80 209.8L304.88 197.8L304.96 201.7L305.04 193.7L305.12 194.7L305.20 198.5L305.27 195.5L305.35 195.7L305.43 188.4L305.51 197.2L305.59 194.7L305.67 208.7L305.74 202.4L305.82 192.2L305.90 190.3L305.98 209.0L306.06 200.9L306.14 203.0L306.21 199.9L306.29 205.0L306.37 204.4L306.45 201.1L306.53 199.1L306.61 190.5L306.69 208.2L306.76 208.9L306.84 192.0L306.92 195.1L307.00 202.2L307.08 210.1L307.16 190.3L307.23 209.6L307.31 189.8L307.39 197.8L307.47 201.9L307.55 202.1L307.63 191.7L307.70 200.4L307.78 213.6L307.86 207.0L307.94 216.1L308.02 196.2L308.10 191.0L308.17 190.4L308.25 211.2L308.33 184.1L308.41 185.7L308.49 201.5L308.57 215.2L308.64 208.3L308.72 190.3L308.80 184.4L308.88 205.5L308.96 214.3L309.04 208.9L309.11 185.2L309.19 200.5L309.27 211.6L309.35 215.8L309.43 193.6L309.51 191.8L309.58 204.9L309.66 202.3L309.74 199.7L309.82 203.7L309.90 205.6L309.98 205.8L310.05 206.0L310.13 189.2L310.21 196.2L310.29 190.5L310.37 185.6L310.45 217.0L310.52 201.1L310.60 190.9L310.68 202.5L310.76 206.1L310.84 196.2L310.92 205.4L311.00 208.2L311.07 203.4L311.15 199.9L311.23 200.4L311.31 191.2L311.39 200.3L311.47 204.9L311.54 178.6L311.62 202.6L311.70 203.0L311.78 201.8L311.86 207.0L311.94 212.6L312.01 198.4L312.09 187.8L312.17 214.1L312.25 207.5L312.33 195.9L312.41 206.8L312.48 194.8L312.56 200.9L312.64 209.7L312.72 202.5L312.80 205.3L312.88 194.7L312.95 218.6L313.03 196.1L313.11 188.6L313.19 198.9L313.27 197.9L313.35 205.5L313.42 196.9L313.50 201.9L313.58 210.8L313.66 210.3L313.74 217.2L313.82 195.8L313.89 198.7L313.97 190.1L314.05 197.7L314.13 193.0L314.21 211.2L314.29 214.4L314.36 205.8L314.44 203.6L314.52 196.6L314.60 201.7L314.68 202.0L314.76 200.1L314.83 197.8L314.91 198.3L314.99 197.1L315.07 205.2L315.15 201.4L315.23 212.0L315.30 209.8L315.38 203.0L315.46 195.9L315.54 207.5L315.62 211.6L315.70 190.9L315.78 208.1L315.85 213.5L315.93 209.0L316.01 210.3L316.09 217.8L316.17 204.1L316.25 186.5L316.32 207.4L316.40 208.0L316.48 189.7L316.56 199.6L316.64 201.5L316.72 188.4L316.79 210.2L316.87 201.1L316.95 195.1L317.03 198.3L317.11 210.2L317.19 208.7L317.26 186.0L317.34 201.4L317.42 203.0L317.50 190.1L317.58 213.9L317.66 201.0L317.73 213.8L317.81 188.2L317.89 209.1L317.97 199.3L318.05 208.6L318.13 199.1L318.20 197.1L318.28 200.4L318.36 203.5L318.44 197.8L318.52 202.7L318.60 205.2L318.67 193.7L318.75 191.5L318.83 211.2L318.91 209.2L318.99 207.7L319.07 197.3L319.14 211.5L319.22 187.3L319.30 200.0L319.38 198.8L319.46 191.4L319.54 207.4L319.61 196.5L319.69 196.1L319.77 188.8L319.85 209.4L319.93 188.3L320.01 194.1L320.09 197.8L320.16 190.2L320.24 202.8L320.32 202.2L320.40 191.6L320.48 203.7L320.56 190.1L320.63 188.3L320.71 198.1L320.79 198.5L320.87 206.4L320.95 208.6L321.03 187.9L321.10 209.3L321.18 199.5L321.26 197.3L321.34 208.4L321.42 206.7L321.50 206.9L321.57 184.1L321.65 196.4L321.73 188.2L321.81 184.6L321.89 190.5L321.97 188.6L322.04 204.5L322.12 206.8L322.20 187.8L322.28 187.8L322.36 209.1L322.44 189.7L322.51 197.2L322.59 191.8L322.67 190.7L322.75 185.3L322.83 206.1L322.91 200.3L322.98 188.9L323.06 202.7L323.14 194.4L323.22 201.0L323.30 213.2L323.38 205.4L323.45 191.2L323.53 205.3L323.61 212.2L323.69 204.9L323.77 199.2L323.85 195.0L323.92 196.7L324.00 194.6L324.08 209.3L324.16 205.8L324.24 207.4L324.32 204.3L324.40 195.5L324.47 188.5L324.55 202.4L324.63 190.1L324.71 189.8L324.79 209.8L324.87 207.8L324.94 198.6L325.02 211.2L325.10 185.3L325.18 214.2L325.26 210.3L325.34 191.8L325.41 207.1L325.49 192.5L325.57 208.8L325.65 190.1L325.73 205.6L325.81 192.4L325.88 190.4L325.96 211.9L326.04 208.2L326.12 213.4L326.20 209.6L326.28 190.9L326.35 200.5L326.43 191.3L326.51 187.9L326.59 190.2L326.67 192.4L326.75 204.1L326.82 203.7L326.90 196.7L326.98 191.2L327.06 189.9L327.14 196.9L327.22 202.8L327.29 200.9L327.37 186.4L327.45 197.1L327.53 184.6L327.61 206.7L327.69 191.1L327.76 197.7L327.84 191.9L327.92 207.1L328.00 196.4L328.08 200.7L328.16 202.7L328.23 210.0L328.31 211.3L328.39 203.2L328.47 194.2L328.55 197.3L328.63 197.5L328.71 196.6L328.78 210.9L328.86 190.0L328.94 199.3L329.02 207.0L329.10 205.1L329.18 190.4L329.25 198.0L329.33 212.8L329.41 184.0L329.49 211.7L329.57 186.1L329.65 191.3L329.72 208.8L329.80 188.9L329.88 188.8L329.96 190.1L330.04 193.0L330.12 196.5L330.19 197.7L330.27 205.0L330.35 197.1L330.43 188.7L330.51 201.0L330.59 184.7L330.66 212.1L330.74 199.6L330.82 211.7L330.90 213.3L330.98 197.3L331.06 203.0L331.13 205.2L331.21 209.1L331.29 202.2L331.37 212.5L331.45 201.8L331.53 204.9L331.60 210.3L331.68 195.6L331.76 214.0L331.84 195.4L331.92 197.1L332.00 194.3L332.07 198.5L332.15 191.6L332.23 202.4L332.31 209.3L332.39 195.9L332.47 207.3L332.54 203.4L332.62 198.7L332.70 208.3L332.78 190.4L332.86 212.0L332.94 189.0L333.02 200.3L333.09 186.2L333.17 189.7L333.25 192.7L333.33 196.8L333.41 198.7L333.49 211.0L333.56 205.2L333.64 208.4L333.72 206.6L333.80 201.2L333.88 207.4L333.96 198.5L334.03 202.4L334.11 204.3L334.19 195.8L334.27 195.0L334.35 210.8L334.43 202.9L334.50 179.3L334.58 199.8L334.66 195.0L334.74 208.1L334.82 190.5L334.90 187.1L334.97 193.7L335.05 201.2L335.13 199.7L335.21 214.2L335.29 193.6L335.37 202.8L335.44 195.7L335.52 196.0L335.60 197.7L335.68 184.0L335.76 190.8L335.84 206.0L335.91 193.4L335.99 193.2L336.07 199.5L336.15 187.9L336.23 203.4L336.31 213.3L336.38 209.2L336.46 195.8L336.54 208.7L336.62 198.3L336.70 211.8L336.78 195.9L336.85 202.4L336.93 208.2L337.01 205.1L337.09 202.5L337.17 190.9L337.25 197.4L337.33 201.9L337.40 198.3L337.48 191.0L337.56 195.0L337.64 185.9L337.72 206.7L337.80 191.4L337.87 198.6L337.95 205.8L338.03 193.6L338.11 191.3L338.19 190.5L338.27 194.8L338.34 208.0L338.42 198.1L338.50 195.9L338.58 186.4L338.66 198.7L338.74 198.3L338.81 187.0L338.89 199.3L338.97 204.2L339.05 196.9L339.13 191.7L339.21 198.3L339.28 212.8L339.36 203.7L339.44 190.3L339.52 206.8L339.60 191.2L339.68 198.1L339.75 207.4L339.83 191.6L339.91 215.7L339.99 215.4L340.07 212.1L340.15 194.3L340.22 202.6L340.30 193.2L340.38 200.7L340.46 198.6L340.54 204.8L340.62 203.7L340.69 190.4L340.77 191.8L340.85 210.7L340.93 193.8L341.01 176.9L341.09 191.9L341.16 208.4L341.24 192.0L341.32 197.6L341.40 203.0L341.48 190.5L341.56 189.0L341.63 204.8L341.71 198.7L341.79 203.6L341.87 199.9L341.95 186.8L342.03 204.0L342.11 193.9L342.18 197.2L342.26 199.1L342.34 209.5L342.42 193.3L342.50 209.3L342.58 192.2L342.65 200.8L342.73 198.5L342.81 204.2L342.89 207.9L342.97 208.9L343.05 199.8L343.12 200.8L343.20 196.9L343.28 202.7L343.36 191.7L343.44 198.4L343.52 198.7L343.59 202.2L343.67 200.1L343.75 193.0L343.83 206.4L343.91 209.9L343.99 195.9L344.06 195.5L344.14 199.7L344.22 197.4L344.30 210.5L344.38 208.6L344.46 200.0L344.53 200.3L344.61 210.2L344.69 195.0L344.77 214.1L344.85 189.0L344.93 209.0L345.00 205.2L345.08 209.0L345.16 210.8L345.24 202.9L345.32 214.1L345.40 203.1L345.47 198.2L345.55 202.8L345.63 200.2L345.71 211.4L345.79 213.8L345.87 210.7L345.94 190.1L346.02 196.7L346.10 213.5L346.18 186.3L346.26 193.3L346.34 189.9L346.42 190.4L346.49 188.6L346.57 212.8L346.65 199.2L346.73 207.2L346.81 185.0L346.89 192.7L346.96 200.1L347.04 202.4L347.12 215.4L347.20 198.9L347.28 207.7L347.36 188.3L347.43 192.2L347.51 200.8L347.59 203.7L347.67 189.8L347.75 204.9L347.83 189.8L347.90 197.8L347.98 202.7L348.06 196.1L348.14 186.1L348.22 212.3L348.30 192.1L348.37 192.2L348.45 202.4L348.53 187.7L348.61 192.9L348.69 194.2L348.77 208.8L348.84 193.9L348.92 210.5L349.00 194.7L349.08 183.9L349.16 208.1L349.24 187.1L349.31 209.3L349.39 199.3L349.47 192.4L349.55 211.4L349.63 196.5L349.71 207.2L349.78 205.7L349.86 191.4L349.94 200.8L350.02 195.7L350.10 199.8L350.18 196.0L350.25 187.1L350.33 198.7L350.41 202.7L350.49 199.8L350.57 192.4L350.65 195.2L350.73 215.6L350.80 200.8L350.88 195.4L350.96 181.4L351.04 205.5L351.12 202.6L351.20 209.7L351.27 200.7L351.35 213.3L351.43 207.8L351.51 200.8L351.59 211.8L351.67 202.6L351.74 206.4L351.82 188.9L351.90 186.9L351.98 184.1L352.06 198.6L352.14 192.9L352.21 182.7L352.29 206.0L352.37 186.3L352.45 208.3L352.53 190.1L352.61 212.1L352.68 203.7L352.76 201.9L352.84 202.4L352.92 214.5L353.00 198.7L353.08 202.8L353.15 187.5L353.23 193.9L353.31 215.8L353.39 198.7L353.47 190.0L353.55 201.0L353.62 206.6L353.70 211.0L353.78 203.5L353.86 208.4L353.94 202.6L354.02 203.1L354.09 188.8L354.17 208.7L354.25 196.5L354.33 209.4L354.41 197.1L354.49 190.2L354.56 205.3L354.64 209.9L354.72 199.7L354.80 199.8L354.88 206.0L354.96 195.6L355.04 199.3L355.11 192.9L355.19 211.1L355.27 192.0L355.35 188.8L355.43 207.6L355.51 184.8L355.58 197.6L355.66 210.6L355.74 209.2L355.82 207.0L355.90 206.1L355.98 202.3L356.05 196.9L356.13 202.0L356.21 203.1L356.29 208.6L356.37 215.1L356.45 206.7L356.52 210.2L356.60 191.1L356.68 217.4L356.76 189.6L356.84 220.1L356.92 201.9L356.99 199.9L357.07 209.5L357.15 208.7L357.23 191.2L357.31 209.3L357.39 201.0L357.46 199.6L357.54 193.1L357.62 210.4L357.70 188.5L357.78 201.6L357.86 190.3L357.93 211.3L358.01 189.9L358.09 201.0L358.17 191.8L358.25 206.0L358.33 191.2L358.40 199.7L358.48 214.3L358.56 181.9L358.64 206.3L358.72 195.1L358.80 201.9L358.87 204.3L358.95 203.6L359.03 190.9L359.11 190.8L359.19 190.9L359.27 212.6L359.35 191.5L359.42 211.9L359.50 182.9L359.58 196.0L359.66 189.6L359.74 200.1L359.82 198.6L359.89 206.7L359.97 184.6L360.05 203.2L360.13 189.8L360.21 207.6L360.29 201.5L360.36 203.7L360.44 201.1L360.52 204.8L360.60 193.3L360.68 193.0L360.76 212.5L360.83 204.2L360.91 210.7L360.99 190.0L361.07 210.4L361.15 195.1L361.23 198.5L361.30 200.6L361.38 214.6L361.46 186.2L361.54 201.5L361.62 192.8L361.70 190.1L361.77 208.9L361.85 208.8L361.93 186.1L362.01 184.9L362.09 207.7L362.17 200.9L362.24 190.7L362.32 201.5L362.40 188.5L362.48 193.6L362.56 200.8L362.64 192.9L362.71 204.5L362.79 188.8L362.87 206.2L362.95 188.5L363.03 181.8L363.11 213.4L363.18 186.2L363.26 211.8L363.34 200.8L363.42 185.5L363.50 189.9L363.58 192.8L363.65 196.0L363.73 198.2L363.81 195.1L363.89 201.9L363.97 202.7L364.05 210.3L364.13 186.0L364.20 200.3L364.28 185.1L364.36 192.0L364.44 195.1L364.52 209.4L364.60 202.5L364.67 199.6L364.75 201.2L364.83 202.9L364.91 216.7L364.99 203.9L365.07 202.4L365.14 204.6L365.22 203.0L365.30 212.3L365.38 208.0L365.46 187.5L365.54 208.5L365.61 205.0L365.69 207.8L365.77 201.6L365.85 204.9L365.93 184.5L366.01 209.1L366.08 188.2L366.16 204.4L366.24 195.2L366.32 181.6L366.40 200.2L366.48 200.1L366.55 220.3L366.63 203.2L366.71 202.2L366.79 198.6L366.87 197.5L366.95 209.4L367.02 208.5L367.10 191.7L367.18 202.5L367.26 199.6L367.34 192.8L367.42 198.8L367.49 198.3L367.57 209.3L367.65 200.0L367.73 213.0L367.81 185.8L367.89 207.2L367.96 186.2L368.04 204.6L368.12 201.3L368.20 188.5L368.28 197.7L368.36 198.0L368.44 202.5L368.51 202.4L368.59 206.8L368.67 207.2L368.75 213.6L368.83 201.4L368.91 207.3L368.98 187.8L369.06 183.8L369.14 185.0L369.22 209.9L369.30 203.3L369.38 201.2L369.45 212.0L369.53 186.9L369.61 192.2L369.69 196.7L369.77 184.8L369.85 194.6L369.92 202.7L370.00 196.9L370.08 204.3L370.16 194.7L370.24 210.7L370.32 194.4L370.39 202.7L370.47 203.9L370.55 203.5L370.63 201.1L370.71 213.3L370.79 193.4L370.86 201.8L370.94 185.5L371.02 200.0L371.10 190.6L371.18 200.2L371.26 201.2L371.33 210.1L371.41 204.2L371.49 205.4L371.57 217.4L371.65 202.7L371.73 206.6L371.80 196.5L371.88 190.0L371.96 202.7L372.04 189.1L372.12 188.7L372.20 191.6L372.27 203.0L372.35 198.7L372.43 186.4L372.51 186.9L372.59 189.3L372.67 213.1L372.75 216.5L372.82 185.6L372.90 192.1L372.98 188.1L373.06 193.5L373.14 202.7L373.22 194.8L373.29 200.3L373.37 187.2L373.45 191.1L373.53 208.4L373.61 206.9L373.69 190.1L373.76 190.9L373.84 196.6L373.92 196.0L374.00 210.2L374.08 207.8L374.16 194.1L374.23 213.8L374.31 194.4L374.39 193.4L374.47 192.7L374.55 191.1L374.63 184.8L374.70 196.6L374.78 207.4L374.86 213.0L374.94 216.4L375.02 198.7L375.10 190.8L375.17 212.8L375.25 197.8L375.33 206.5L375.41 202.2L375.49 197.4L375.57 199.3L375.64 209.8L375.72 191.6L375.80 201.1L375.88 214.0L375.96 191.5L376.04 186.6L376.11 203.4L376.19 186.5L376.27 212.2L376.35 202.1L376.43 188.3L376.51 188.2L376.58 194.1L376.66 189.7L376.74 203.6L376.82 191.9L376.90 190.4L376.98 190.4L377.06 195.6L377.13 191.1L377.21 195.0L377.29 193.1L377.37 212.0L377.45 193.2L377.53 208.3L377.60 203.3L377.68 199.1L377.76 197.0L377.84 210.6L377.92 204.8L378.00 197.1L378.07 203.6L378.15 199.4L378.23 197.2L378.31 197.4L378.39 204.9L378.47 197.7L378.54 193.5L378.62 210.3L378.70 191.5L378.78 208.7L378.86 195.8L378.94 193.1L379.01 192.8L379.09 209.8L379.17 208.2L379.25 209.8L379.33 193.5L379.41 198.3L379.48 213.6L379.56 191.7L379.64 189.0L379.72 204.7L379.80 200.6L379.88 197.1L379.95 208.8L380.03 203.8L380.11 193.8L380.19 203.1L380.27 199.9L380.35 198.6L380.42 185.9L380.50 196.9L380.58 196.1L380.66 204.3L380.74 188.7L380.82 199.0L380.89 200.1L380.97 188.3L381.05 188.1L381.13 208.3L381.21 202.8L381.29 188.5L381.37 204.3L381.44 186.7L381.52 201.4L381.60 184.6L381.68 208.6L381.76 214.5L381.84 211.5L381.91 184.5L381.99 206.6L382.07 203.9L382.15 205.2L382.23 206.8L382.31 198.1L382.38 198.4L382.46 205.7L382.54 204.8L382.62 188.1L382.70 190.4L382.78 190.2L382.85 188.7L382.93 201.7L383.01 190.9L383.09 186.3L383.17 207.6L383.25 188.0L383.32 217.7L383.40 214.3L383.48 211.6L383.56 208.7L383.64 208.6L383.72 204.5L383.79 191.3L383.87 206.7L383.95 203.4L384.03 210.6L384.11 212.4L384.19 201.6L384.26 206.9L384.34 190.9L384.42 198.6L384.50 213.7L384.58 192.0L384.66 210.0L384.73 203.7L384.81 209.0L384.89 207.7L384.97 205.6L385.05 210.0L385.13 206.8L385.20 202.6L385.28 192.1L385.36 192.3L385.44 185.6L385.52 212.6L385.60 203.7L385.68 189.0L385.75 209.6L385.83 201.6L385.91 192.1L385.99 187.0L386.07 193.7L386.15 196.5L386.22 201.5L386.30 193.3L386.38 198.9L386.46 196.3L386.54 206.0L386.62 201.2L386.69 208.1L386.77 209.4L386.85 207.9L386.93 207.9L387.01 206.3L387.09 205.4L387.16 212.0L387.24 196.7L387.32 196.6L387.40 187.0L387.48 217.2L387.56 211.4L387.63 208.7L387.71 208.1L387.79 199.4L387.87 208.0L387.95 207.3L388.03 192.2L388.10 201.8L388.18 212.6L388.26 190.7L388.34 183.2L388.42 189.6L388.50 201.6L388.57 188.2L388.65 200.8L388.73 203.4L388.81 197.4L388.89 188.6L388.97 198.8L389.04 202.9L389.12 211.2L389.20 198.0L389.28 209.3L389.36 201.0L389.44 211.2L389.51 208.1L389.59 208.7L389.67 206.3L389.75 209.7L389.83 189.0L389.91 191.7L389.98 203.2L390.06 209.1L390.14 189.8L390.22 202.4L390.30 193.9L390.38 190.3L390.46 203.9L390.53 195.4L390.61 195.3L390.69 204.1L390.77 201.7L390.85 205.9L390.93 230.5L391.00 203.8L391.08 186.5L391.16 190.3L391.24 180.6L391.32 199.3L391.40 191.1L391.47 205.9L391.55 207.1L391.63 208.1L391.71 195.2L391.79 191.8L391.87 214.4L391.94 192.5L392.02 190.9L392.10 191.7L392.18 210.6L392.26 198.0L392.34 196.6L392.41 210.9L392.49 209.7L392.57 183.5L392.65 206.4L392.73 204.7L392.81 214.7L392.88 205.9L392.96 188.2L393.04 195.9L393.12 208.0L393.20 199.7L393.28 196.2L393.35 193.8L393.43 208.9L393.51 196.1L393.59 206.3L393.67 204.8L393.75 208.0L393.82 207.6L393.90 194.9L393.98 213.5L394.06 198.0L394.14 180.7L394.22 208.2L394.29 202.8L394.37 200.8L394.45 187.1L394.53 211.5L394.61 194.1L394.69 201.1L394.77 184.8L394.84 202.1L394.92 184.7L395.00 208.7L395.08 196.3L395.16 209.5L395.24 205.7L395.31 210.4L395.39 203.9L395.47 187.1L395.55 205.1L395.63 182.1L395.71 186.8L395.78 196.9L395.86 200.1L395.94 196.8L396.02 207.2L396.10 193.8L396.18 199.2L396.25 214.7L396.33 199.8L396.41 194.0L396.49 199.6L396.57 196.8L396.65 200.1L396.72 204.7L396.80 190.2L396.88 188.0L396.96 203.0L397.04 191.7L397.12 209.4L397.19 189.0L397.27 207.8L397.35 199.8L397.43 190.8L397.51 204.8L397.59 199.7L397.66 190.4L397.74 205.3L397.82 196.6L397.90 189.9L397.98 197.5L398.06 207.4L398.13 203.9L398.21 202.5L398.29 200.0L398.37 193.5L398.45 212.2L398.53 200.9L398.60 198.1L398.68 187.5L398.76 211.6L398.84 208.2L398.92 191.2L399.00 200.6L399.08 189.9L399.15 200.6L399.23 206.2L399.31 200.8L399.39 189.1L399.47 192.5L399.55 198.1L399.62 198.7L399.70 190.1L399.78 193.6L399.86 197.6L399.94 192.5L400.02 199.2L400.09 209.5L400.17 191.1L400.25 189.3L400.33 188.2L400.41 200.8L400.49 210.1L400.56 195.9L400.64 205.6L400.72 214.1L400.80 198.6L400.88 207.2L400.96 199.5L401.03 204.7L401.11 191.6L401.19 191.4L401.27 194.9L401.35 189.5L401.43 205.1L401.50 182.8L401.58 213.2L401.66 192.3L401.74 190.4L401.82 203.9L401.90 198.9L401.97 210.0L402.05 204.3L402.13 197.1L402.21 210.4L402.29 214.5L402.37 203.5L402.44 207.9L402.52 208.6L402.60 201.8L402.68 211.1L402.76 190.0L402.84 189.7L402.91 199.9L402.99 205.6L403.07 200.8L403.15 201.2L403.23 207.5L403.31 206.2L403.39 195.8L403.46 208.3L403.54 206.1L403.62 204.3L403.70 208.8L403.78 197.5L403.86 210.5L403.93 191.0L404.01 192.7L404.09 200.6L404.17 191.5L404.25 190.1L404.33 203.8L404.40 200.8L404.48 205.8L404.56 203.6L404.64 203.8L404.72 199.4L404.80 194.9L404.87 183.9L404.95 196.8L405.03 191.0L405.11 202.4L405.19 186.8L405.27 199.0L405.34 201.9L405.42 202.8L405.50 200.0L405.58 203.9L405.66 198.4L405.74 186.2L405.81 199.6L405.89 207.1L405.97 213.9L406.05 201.3L406.13 208.9L406.21 207.3L406.28 198.8L406.36 196.7L406.44 195.4L406.52 189.8L406.60 208.5L406.68 206.2L406.75 208.1L406.83 208.9L406.91 206.2L406.99 207.9L407.07 193.2L407.15 209.2L407.22 184.0L407.30 215.1L407.38 191.7L407.46 212.2L407.54 204.7L407.62 210.1L407.70 200.3L407.77 195.4L407.85 204.1L407.93 206.3L408.01 208.8L408.09 208.0L408.17 208.0L408.24 206.5L408.32 199.8L408.40 191.5L408.48 206.7L408.56 214.9L408.64 203.8L408.71 191.9L408.79 209.1L408.87 196.7L408.95 209.8L409.03 210.5L409.11 198.2L409.18 214.0L409.26 204.2L409.34 219.1L409.42 209.2L409.50 196.7L409.58 205.1L409.65 207.0L409.73 195.1L409.81 208.5L409.89 209.9L409.97 204.3L410.05 201.3L410.12 199.2L410.20 202.3L410.28 189.8L410.36 194.8L410.44 201.9L410.52 183.6L410.59 212.3L410.67 198.2L410.75 207.7L410.83 184.5L410.91 197.7L410.99 192.2L411.06 196.6L411.14 188.2L411.22 205.6L411.30 191.5L411.38 213.3L411.46 194.8L411.53 190.2L411.61 191.7L411.69 194.5L411.77 214.2L411.85 199.9L411.93 203.8L412.01 187.9L412.08 195.2L412.16 194.0L412.24 189.2L412.32 195.3L412.40 211.2L412.48 207.9L412.55 215.5L412.63 189.7L412.71 202.5L412.79 210.7L412.87 195.7L412.95 204.6L413.02 203.5L413.10 189.2L413.18 215.3L413.26 211.8L413.34 201.6L413.42 203.0L413.49 190.2L413.57 204.0L413.65 195.4L413.73 186.8L413.81 211.2L413.89 211.6L413.96 207.2L414.04 202.7L414.12 209.7L414.20 198.2L414.28 207.7L414.36 190.2L414.43 195.5L414.51 193.8L414.59 198.6L414.67 198.7L414.75 212.8L414.83 202.8L414.90 213.7L414.98 189.1L415.06 209.9L415.14 208.6L415.22 204.9L415.30 184.3L415.37 209.7L415.45 187.1L415.53 199.4L415.61 182.2L415.69 202.8L415.77 205.7L415.84 201.0L415.92 205.8L416.00 207.2L416.08 193.5L416.16 204.9L416.24 191.7L416.31 194.6L416.39 191.4L416.47 187.6L416.55 190.6L416.63 208.8L416.71 189.0L416.79 217.8L416.86 189.4L416.94 189.7L417.02 209.5L417.10 189.4L417.18 214.3L417.26 190.9L417.33 204.5L417.41 203.3L417.49 202.3L417.57 205.9L417.65 193.2L417.73 201.2L417.80 201.2L417.88 200.3L417.96 204.1L418.04 209.2L418.12 194.6L418.20 192.1L418.27 210.2L418.35 191.2L418.43 189.4L418.51 199.0L418.59 188.3L418.67 216.0L418.74 188.8L418.82 207.4L418.90 197.7L418.98 208.6L419.06 182.9L419.14 204.4L419.21 193.9L419.29 211.8L419.37 203.4L419.45 196.3L419.53 201.8L419.61 207.5L419.68 188.1L419.76 212.3L419.84 199.9L419.92 202.3L420.00 204.0L420.08 194.0L420.15 198.3L420.23 202.4L420.31 194.0L420.39 201.5L420.47 195.2L420.55 189.3L420.62 198.3L420.70 200.1L420.78 205.9L420.86 188.5L420.94 191.2L421.02 195.2L421.10 197.6L421.17 208.1L421.25 199.9L421.33 197.6L421.41 210.0L421.49 208.8L421.57 201.7L421.64 185.7L421.72 196.9L421.80 211.7L421.88 189.4L421.96 191.5L422.04 193.3L422.11 205.6L422.19 201.7L422.27 184.2L422.35 190.2L422.43 174.5L422.51 213.9L422.58 212.4L422.66 204.6L422.74 208.5L422.82 206.7L422.90 193.1L422.98 189.0L423.05 211.5L423.13 194.7L423.21 191.7L423.29 198.1L423.37 188.8L423.45 189.9L423.52 207.9L423.60 199.3L423.68 197.8L423.76 210.2L423.84 202.7L423.92 190.8L423.99 196.6L424.07 200.4L424.15 182.0L424.23 194.1L424.31 191.1L424.39 208.3L424.46 189.6L424.54 204.6L424.62 202.2L424.70 204.4L424.78 210.7L424.86 194.6L424.93 210.4L425.01 191.9L425.09 207.9L425.17 189.3L425.25 197.2L425.33 189.8L425.41 209.7L425.48 194.7L425.56 192.9L425.64 197.7L425.72 201.6L425.80 205.9L425.88 227.0L425.95 195.3L426.03 210.6L426.11 209.3L426.19 196.7L426.27 218.9L426.35 207.5L426.42 193.4L426.50 200.3L426.58 202.5L426.66 207.6L426.74 198.7L426.82 212.2L426.89 205.7L426.97 192.2L427.05 208.5L427.13 201.8L427.21 203.9L427.29 210.5L427.36 214.8L427.44 208.3L427.52 207.5L427.60 209.2L427.68 201.1L427.76 197.3L427.83 194.0L427.91 196.8L427.99 210.0L428.07 188.5L428.15 196.8L428.23 192.8L428.30 210.7L428.38 190.3L428.46 183.5L428.54 195.1L428.62 190.0L428.70 205.8L428.77 198.8L428.85 201.0L428.93 193.5L429.01 198.9L429.09 197.7L429.17 208.5L429.24 210.1L429.32 200.6L429.40 182.2L429.48 208.9L429.56 194.9L429.64 188.8L429.72 206.3L429.79 212.8L429.87 196.6L429.95 200.9L430.03 208.2L430.11 187.7L430.19 193.0L430.26 200.6L430.34 211.2L430.42 189.2L430.50 189.9L430.58 191.7L430.66 187.0L430.73 209.2L430.81 209.0L430.89 191.5L430.97 195.7L431.05 200.9L431.13 204.9L431.20 190.5L431.28 197.7L431.36 191.5L431.44 209.8L431.52 199.8L431.60 196.0L431.67 190.6L431.75 212.9L431.83 202.3L431.91 206.4L431.99 200.4L432.07 201.7L432.14 196.0L432.22 192.1L432.30 197.6L432.38 201.1L432.46 191.4L432.54 188.3L432.61 199.8L432.69 207.7L432.77 186.2L432.85 191.1L432.93 183.9L433.01 204.2L433.08 204.0L433.16 202.0L433.24 201.2L433.32 211.7L433.40 191.6L433.48 211.9L433.55 219.7L433.63 200.8L433.71 209.4L433.79 197.6L433.87 209.9L433.95 211.1L434.03 215.3L434.10 210.5L434.18 203.1L434.26 184.1L434.34 193.2L434.42 206.3L434.50 188.5L434.57 197.8L434.65 214.2L434.73 213.5L434.81 212.1L434.89 205.7L434.97 200.0L435.04 206.0L435.12 205.4L435.20 208.6L435.28 198.6L435.36 192.0L435.44 209.4L435.51 189.1L435.59 208.0L435.67 203.0L435.75 186.6L435.83 194.0L435.91 199.9L435.98 214.5L436.06 199.5L436.14 203.7L436.22 202.4L436.30 190.0L436.38 205.4L436.45 185.9L436.53 199.9L436.61 198.6L436.69 203.3L436.77 199.4L436.85 188.5L436.92 197.8L437.00 209.0L437.08 207.5L437.16 189.6L437.24 194.5L437.32 208.1L437.39 201.5L437.47 199.4L437.55 194.2L437.63 208.8L437.71 199.3L437.79 210.8L437.86 207.5L437.94 202.5L438.02 188.5L438.10 201.2L438.18 186.6L438.26 196.3L438.33 188.8L438.41 201.8L438.49 213.8L438.57 216.2L438.65 204.3L438.73 186.0L438.81 201.8L438.88 205.0L438.96 193.8L439.04 203.8L439.12 203.9L439.20 198.3L439.28 196.1L439.35 205.8L439.43 207.9L439.51 187.0L439.59 208.2L439.67 208.4L439.75 202.1L439.82 201.7L439.90 197.2L439.98 187.2L440.06 188.7L440.14 200.8L440.22 199.1L440.29 190.7L440.37 201.5L440.45 198.6L440.53 209.6L440.61 196.1L440.69 201.2L440.76 211.6L440.84 197.8L440.92 183.6L441.00 196.7L441.08 207.8L441.16 188.9L441.23 196.6L441.31 198.3L441.39 187.5L441.47 191.1L441.55 184.3L441.63 207.7L441.70 204.4L441.78 201.2L441.86 198.2L441.94 210.1L442.02 197.3L442.10 211.4L442.17 205.6L442.25 202.7L442.33 197.6L442.41 196.9L442.49 207.4L442.57 196.7L442.64 197.1L442.72 201.2L442.80 200.1L442.88 205.1L442.96 185.8L443.04 188.3L443.12 197.7L443.19 188.6L443.27 208.3L443.35 205.2L443.43 203.4L443.51 195.6L443.59 203.4L443.66 208.5L443.74 212.0L443.82 209.6L443.90 191.0L443.98 195.2L444.06 211.5L444.13 185.5L444.21 204.9L444.29 204.6L444.37 201.9L444.45 199.9L444.53 203.9L444.60 200.7L444.68 192.1L444.76 191.1L444.84 206.6L444.92 201.9L445.00 207.3L445.07 204.4L445.15 201.3L445.23 203.3L445.31 194.0L445.39 208.6L445.47 196.2L445.54 192.5L445.62 203.3L445.70 203.4L445.78 193.9L445.86 203.8L445.94 203.5L446.01 198.2L446.09 218.0L446.17 192.9L446.25 197.8L446.33 194.2L446.41 211.3L446.48 204.3L446.56 195.7L446.64 194.5L446.72 205.9L446.80 204.6L446.88 187.4L446.95 197.5L447.03 189.2L447.11 211.1L447.19 195.8L447.27 205.5L447.35 205.0L447.43 189.0L447.50 209.3L447.58 208.7L447.66 206.8L447.74 202.6L447.82 200.1L447.90 195.9L447.97 189.1L448.05 195.4L448.13 186.1L448.21 190.2L448.29 194.6L448.37 201.7L448.44 188.3L448.52 203.2L448.60 190.7L448.68 200.0L448.76 205.5L448.84 193.3L448.91 193.1L448.99 197.1L449.07 190.0L449.15 199.1L449.23 207.1L449.31 199.5L449.38 185.5L449.46 208.8L449.54 213.9L449.62 200.4L449.70 209.1L449.78 188.6L449.85 198.7L449.93 208.6L450.01 200.9L450.09 208.6L450.17 195.2L450.25 191.0L450.32 189.3L450.40 190.3L450.48 200.5L450.56 189.5L450.64 195.2L450.72 210.6L450.79 188.4L450.87 208.3L450.95 205.8L451.03 212.3L451.11 207.9L451.19 215.7L451.26 210.4L451.34 208.0L451.42 210.1L451.50 203.9L451.58 191.9L451.66 203.2L451.74 195.7L451.81 190.0L451.89 206.0L451.97 187.7L452.05 200.8L452.13 200.9L452.21 196.6L452.28 188.5L452.36 210.3L452.44 191.1L452.52 204.8L452.60 199.4L452.68 209.0L452.75 218.3L452.83 189.6L452.91 192.3L452.99 209.3L453.07 208.5L453.15 210.2L453.22 200.8L453.30 184.6L453.38 201.7L453.46 213.2L453.54 192.5L453.62 208.4L453.69 212.5L453.77 196.3L453.85 200.5L453.93 198.6L454.01 192.8L454.09 190.9L454.16 215.5L454.24 198.6L454.32 189.7L454.40 189.2L454.48 209.2L454.56 214.0L454.63 209.6L454.71 196.2L454.79 202.3L454.87 191.7L454.95 202.0L455.03 210.6L455.10 209.7L455.18 202.6L455.26 191.6L455.34 187.7L455.42 209.0L455.50 195.7L455.57 201.0L455.65 210.0L455.73 210.1L455.81 187.2L455.89 204.4L455.97 201.2L456.05 195.5L456.12 196.5L456.20 193.0L456.28 207.8L456.36 203.9L456.44 197.7L456.52 196.7L456.59 207.1L456.67 213.2L456.75 191.4L456.83 191.5L456.91 190.9L456.99 201.5L457.06 213.8L457.14 204.1L457.22 184.7L457.30 197.2L457.38 197.7L457.46 212.8L457.53 206.4L457.61 190.7L457.69 196.8L457.77 201.6L457.85 189.1L457.93 192.8L458.00 194.6L458.08 202.0L458.16 195.9L458.24 190.4L458.32 197.0L458.40 210.6L458.47 202.0L458.55 203.0L458.63 195.9L458.71 189.0L458.79 201.1L458.87 204.4L458.94 192.5L459.02 195.4L459.10 207.6L459.18 195.4L459.26 198.4L459.34 196.7L459.41 212.2L459.49 214.9L459.57 212.0L459.65 213.1L459.73 190.8L459.81 190.6L459.88 210.7L459.96 187.8L460.04 209.8L460.12 207.8L460.20 183.9L460.28 210.7L460.36 192.9L460.43 191.7L460.51 189.9L460.59 193.4L460.67 197.7L460.75 187.4L460.83 201.1L460.90 199.3L460.98 196.1L461.06 203.5L461.14 201.7L461.22 189.3L461.30 186.9L461.37 193.9L461.45 201.4L461.53 204.9L461.61 203.9L461.69 203.8L461.77 204.4L461.84 201.2L461.92 202.4L462.00 190.1L462.08 211.5L462.16 204.1L462.24 191.7L462.31 204.1L462.39 204.1L462.47 194.4L462.55 201.1L462.63 208.8L462.71 198.7L462.78 193.6L462.86 213.1L462.94 191.1L463.02 213.3L463.10 192.9L463.18 210.9L463.25 197.9L463.33 200.7L463.41 190.4L463.49 201.0L463.57 204.2L463.65 207.2L463.72 198.1L463.80 202.5L463.88 191.3L463.96 195.9L464.04 189.1L464.12 192.7L464.19 198.4L464.27 200.9L464.35 193.6L464.43 192.1L464.51 210.9L464.59 196.0L464.66 203.6L464.74 196.9L464.82 191.8L464.90 214.5L464.98 201.3L465.06 190.5L465.14 213.4L465.21 197.9L465.29 200.1L465.37 205.5L465.45 191.1L465.53 191.0L465.61 200.0L465.68 188.1L465.76 187.8L465.84 198.1L465.92 191.5L466.00 191.3L466.08 186.2L466.15 191.7L466.23 192.9L466.31 198.9L466.39 192.5L466.47 187.0L466.55 200.9L466.62 201.1L466.70 208.7L466.78 181.6L466.86 203.8L466.94 204.8L467.02 205.4L467.09 189.4L467.17 196.3L467.25 215.1L467.33 198.6L467.41 185.6L467.49 200.6L467.56 198.9L467.64 179.8L467.72 202.4L467.80 202.1L467.88 193.3L467.96 182.3L468.03 195.4L468.11 212.5L468.19 201.5L468.27 202.1L468.35 192.1L468.43 203.4L468.50 198.6L468.58 210.5L468.66 210.4L468.74 199.4L468.82 186.6L468.90 208.6L468.97 212.3L469.05 189.3L469.13 195.9L469.21 191.6L469.29 201.6L469.37 197.4L469.45 200.9L469.52 200.0L469.60 185.8L469.68 203.8L469.76 203.7L469.84 199.9L469.92 201.7L469.99 186.3L470.07 201.5L470.15 195.8L470.23 210.1L470.31 194.2L470.39 193.1L470.46 192.9L470.54 212.4L470.62 205.7L470.70 218.7L470.78 186.4L470.86 201.0L470.93 186.6L471.01 185.0L471.09 190.2L471.17 205.9L471.25 202.0L471.33 191.6L471.40 214.5L471.48 188.0L471.56 187.5L471.64 191.1L471.72 202.6L471.80 196.1L471.87 212.3L471.95 208.5L472.03 204.2L472.11 207.0L472.19 186.4L472.27 195.1L472.34 217.4L472.42 189.5L472.50 194.6L472.58 202.2L472.66 206.7L472.74 184.2L472.81 197.4L472.89 197.1L472.97 212.4L473.05 205.3L473.13 191.0L473.21 198.6L473.28 204.2L473.36 202.9L473.44 212.3L473.52 217.7L473.60 194.3L473.68 211.5L473.76 212.2L473.83 196.6L473.91 190.8L473.99 203.3L474.07 189.8L474.15 199.5L474.23 225.0L474.30 186.6L474.38 209.3L474.46 186.9L474.54 202.7L474.62 200.7L474.70 204.4L474.77 208.9L474.85 193.6L474.93 186.4L475.01 188.6L475.09 205.2L475.17 194.6L475.24 190.1L475.32 193.8L475.40 210.6L475.48 184.3L475.56 206.9L475.64 207.8L475.71 198.5L475.79 197.6L475.87 205.2L475.95 210.7L476.03 210.2L476.11 200.0L476.18 214.2L476.26 189.6L476.34 193.1L476.42 197.7L476.50 197.8L476.58 208.1L476.65 205.3L476.73 191.0L476.81 204.9L476.89 186.8L476.97 190.3L477.05 192.6L477.12 202.3L477.20 208.4L477.28 201.5L477.36 208.6L477.44 203.5L477.52 203.4L477.59 205.3L477.67 189.5L477.75 208.2L477.83 207.1L477.91 189.3L477.99 197.3L478.07 194.7L478.14 205.9L478.22 196.5L478.30 188.5L478.38 199.8L478.46 195.4L478.54 189.0L478.61 193.6L478.69 188.9L478.77 210.0L478.85 213.4L478.93 209.6L479.01 195.5L479.08 206.4L479.16 215.0L479.24 185.6L479.32 188.5L479.40 205.1L479.48 206.2L479.55 206.6L479.63 192.3L479.71 195.2L479.79 198.6L479.87 188.1L479.95 207.7L480.02 210.1L480.10 200.1L480.18 200.6L480.26 199.1L480.34 195.7L480.42 212.2L480.49 186.8L480.57 213.6L480.65 196.5L480.73 196.3L480.81 191.4L480.89 197.7L480.96 207.8L481.04 202.0L481.12 211.1L481.20 201.7L481.28 202.3L481.36 214.2L481.43 183.5L481.51 205.7L481.59 194.3L481.67 188.5L481.75 200.5L481.83 203.9L481.90 209.6L481.98 207.0L482.06 206.9L482.14 201.6L482.22 191.6L482.30 198.1L482.38 187.4L482.45 195.8L482.53 197.6L482.61 224.0L482.69 201.7L482.77 197.3L482.85 211.8L482.92 200.7L483.00 206.7L483.08 202.1L483.16 200.5L483.24 202.8L483.32 200.7L483.39 196.3L483.47 196.8L483.55 206.4L483.63 190.9L483.71 199.6L483.79 196.2L483.86 186.0L483.94 186.4L484.02 183.6L484.10 202.4L484.18 195.7L484.26 194.9L484.33 199.0L484.41 201.5L484.49 191.4L484.57 189.6L484.65 183.5L484.73 205.1L484.80 195.1L484.88 207.1L484.96 202.7L485.04 217.2L485.12 183.9L485.20 212.5L485.27 199.0L485.35 213.6L485.43 203.3L485.51 209.1L485.59 215.6L485.67 209.2L485.74 202.3L485.82 201.3L485.90 214.6L485.98 193.3L486.06 203.1L486.14 209.7L486.21 187.3L486.29 206.7L486.37 197.7L486.45 187.3L486.53 199.6L486.61 201.2L486.68 190.7L486.76 204.2L486.84 199.4L486.92 201.6L487.00 203.8L487.08 192.1L487.16 197.2L487.23 187.9L487.31 196.0L487.39 211.4L487.47 195.9L487.55 202.9L487.63 202.6L487.70 190.6L487.78 195.7L487.86 212.5L487.94 184.6L488.02 201.5L488.10 212.7L488.17 203.3L488.25 195.0L488.33 209.7L488.41 208.1L488.49 213.7L488.57 197.3L488.64 205.1L488.72 187.3L488.80 197.3L488.88 197.6L488.96 205.9L489.04 190.6L489.11 211.2L489.19 197.2L489.27 195.0L489.35 207.5L489.43 210.1L489.51 189.5L489.58 185.6L489.66 196.0L489.74 185.6L489.82 195.3L489.90 202.0L489.98 204.0L490.05 210.3L490.13 191.0L490.21 205.5L490.29 206.2L490.37 196.3L490.45 195.0L490.52 207.1L490.60 198.0L490.68 201.7L490.76 198.8L490.84 201.6L490.92 204.2L490.99 217.7L491.07 205.8L491.15 189.3L491.23 203.3L491.31 198.4L491.39 193.7L491.47 209.0L491.54 199.5L491.62 202.8L491.70 196.4L491.78 193.8L491.86 199.5L491.94 202.2L492.01 190.8L492.09 198.9L492.17 211.9L492.25 189.0L492.33 195.4L492.41 205.7L492.48 200.8L492.56 208.7L492.64 198.8L492.72 211.8L492.80 190.4L492.88 195.2L492.95 209.0L493.03 194.9L493.11 211.7L493.19 205.2L493.27 209.0L493.35 192.9L493.42 192.8L493.50 211.1L493.58 198.4L493.66 194.9L493.74 203.5L493.82 182.3L493.89 212.4L493.97 188.5L494.05 187.5L494.13 203.6L494.21 209.8L494.29 189.3L494.36 218.0L494.44 200.7L494.52 211.6L494.60 200.5L494.68 205.6L494.76 210.8L494.83 194.3L494.91 189.6L494.99 211.2L495.07 193.3L495.15 199.3L495.23 206.6L495.30 205.3L495.38 194.4L495.46 189.8L495.54 203.0L495.62 218.0L495.70 191.8L495.78 196.1L495.85 214.8L495.93 205.2L496.01 200.5L496.09 203.1L496.17 197.2L496.25 208.4L496.32 193.5L496.40 219.8L496.48 196.6L496.56 205.9L496.64 201.5L496.72 193.4L496.79 188.4L496.87 209.2L496.95 201.4L497.03 209.2L497.11 200.0L497.19 205.9L497.26 210.3L497.34 189.9L497.42 196.6L497.50 200.4L497.58 188.6L497.66 213.0L497.73 196.2L497.81 186.9L497.89 203.8L497.97 208.3L498.05 207.8L498.13 189.2L498.20 190.2L498.28 197.0L498.36 191.0L498.44 206.7L498.52 204.1L498.60 191.6L498.67 208.8L498.75 198.2L498.83 200.7L498.91 208.2L498.99 198.3L499.07 210.8L499.14 206.5L499.22 215.1L499.30 210.8L499.38 208.4L499.46 196.6L499.54 200.4L499.61 210.7L499.69 202.9L499.77 183.4L499.85 199.8L499.93 196.2L500.01 216.0L500.09 205.2L500.16 189.8L500.24 211.8L500.32 208.6L500.40 207.5L500.48 201.8L500.56 194.2L500.63 213.7L500.71 193.3L500.79 219.2L500.87 208.7L500.95 196.2L501.03 210.2L501.10 208.3L501.18 205.6L501.26 187.1L501.34 209.3L501.42 190.9L501.50 185.1L501.57 204.3L501.65 208.1L501.73 200.7L501.81 209.3L501.89 204.2L501.97 209.7L502.04 212.3L502.12 213.0L502.20 191.3L502.28 207.1L502.36 210.3L502.44 190.4L502.51 202.5L502.59 204.0L502.67 207.9L502.75 200.9L502.83 203.8L502.91 204.9L502.98 202.5L503.06 192.6L503.14 202.7L503.22 188.9L503.30 190.9L503.38 209.6L503.45 209.2L503.53 211.2L503.61 208.0L503.69 193.2L503.77 204.1L503.85 205.5L503.92 199.9L504.00 216.7L504.08 197.5L504.16 202.7L504.24 193.8L504.32 203.7L504.40 190.9L504.47 190.5L504.55 203.7L504.63 194.8L504.71 208.8L504.79 207.6L504.87 210.1L504.94 202.9L505.02 210.8L505.10 210.0L505.18 203.1L505.26 212.3L505.34 194.7L505.41 209.0L505.49 203.3L505.57 203.9L505.65 190.8L505.73 194.6L505.81 203.3L505.88 206.6L505.96 191.8L506.04 202.3L506.12 209.8L506.20 199.7L506.28 194.3L506.35 201.4L506.43 200.5L506.51 188.0L506.59 205.9L506.67 192.9L506.75 187.5L506.82 186.7L506.90 210.4L506.98 195.4L507.06 199.7L507.14 182.8L507.22 189.2L507.29 190.8L507.37 189.8L507.45 195.1L507.53 209.8L507.61 183.7L507.69 213.7L507.76 192.7L507.84 192.6L507.92 199.0L508.00 190.8L508.08 201.2L508.16 192.3L508.23 198.4L508.31 207.8L508.39 191.0L508.47 206.2L508.55 194.2L508.63 209.7L508.71 198.5L508.78 195.1L508.86 189.9L508.94 210.0L509.02 206.0L509.10 201.0L509.18 209.6L509.25 194.5L509.33 182.9L509.41 193.6L509.49 194.2L509.57 208.4L509.65 194.9L509.72 195.2L509.80 185.1L509.88 204.2L509.96 189.4L510.04 204.2L510.12 203.5L510.19 204.9L510.27 198.0L510.35 212.4L510.43 204.4L510.51 187.9L510.59 214.4L510.66 191.5L510.74 192.6L510.82 204.9L510.90 208.1L510.98 190.0L511.06 204.1L511.13 197.7L511.21 202.9L511.29 210.2L511.37 190.6L511.45 193.8L511.53 209.0L511.60 190.2L511.68 210.9L511.76 211.1L511.84 191.7L511.92 204.9L512.00 200.9L512.07 187.2L512.15 209.9L512.23 194.3L512.31 204.7L512.39 199.9L512.47 203.0L512.54 208.1L512.62 200.4L512.70 208.9L512.78 200.7L512.86 209.1L512.94 203.5L513.01 199.5L513.09 211.8L513.17 201.5L513.25 193.4L513.33 199.7L513.41 191.2L513.49 209.4L513.56 194.6L513.64 197.5L513.72 220.3L513.80 201.0L513.88 191.6L513.96 201.5L514.03 200.5L514.11 202.1L514.19 202.3L514.27 209.7L514.35 207.3L514.43 216.8L514.50 184.4L514.58 201.1L514.66 198.6L514.74 194.2L514.82 195.4L514.90 201.6L514.97 212.9L515.05 210.6L515.13 186.7L515.21 196.4L515.29 193.8L515.37 209.7L515.44 205.4L515.52 198.1L515.60 208.0L515.68 189.6L515.76 208.0L515.84 204.9L515.91 210.3L515.99 197.1L516.07 189.0L516.15 198.7L516.23 201.0L516.31 204.3L516.38 192.3L516.46 200.9L516.54 186.3L516.62 203.4L516.70 204.4L516.78 205.8L516.85 215.0L516.93 198.5L517.01 199.6L517.09 213.0L517.17 210.4L517.25 209.8L517.32 203.8L517.40 209.5L517.48 192.7L517.56 189.7L517.64 207.0L517.72 200.7L517.80 209.8L517.87 188.9L517.95 209.9L518.03 208.1L518.11 200.8L518.19 208.3L518.27 181.2L518.34 202.7L518.42 203.1L518.50 209.3L518.58 201.7L518.66 206.6L518.74 204.8L518.81 190.9L518.89 206.4L518.97 196.5L519.05 206.7L519.13 190.8L519.21 207.9L519.28 209.2L519.36 203.2L519.44 189.3L519.52 204.6L519.60 208.6L519.68 202.3L519.75 207.5L519.83 198.2L519.91 207.2L519.99 197.5L520.07 191.5L520.15 195.6L520.22 187.8L520.30 197.7L520.38 185.8L520.46 189.2L520.54 203.4L520.62 192.6L520.69 207.7L520.77 202.8L520.85 201.7L520.93 208.1L521.01 197.6L521.09 201.7L521.16 185.1L521.24 192.7L521.32 203.1L521.40 207.1L521.48 205.9L521.56 207.3L521.63 207.8L521.71 200.8L521.79 211.5L521.87 203.7L521.95 195.7L522.03 231.0L522.11 210.1L522.18 205.5L522.26 191.8L522.34 207.9L522.42 187.5L522.50 213.4L522.58 208.2L522.65 194.4L522.73 188.8L522.81 202.8L522.89 213.3L522.97 203.5L523.05 208.8L523.12 207.2L523.20 204.4L523.28 206.5L523.36 201.3L523.44 199.4L523.52 203.6L523.59 214.1L523.67 202.6L523.75 219.2L523.83 200.2L523.91 204.8L523.99 208.9L524.06 184.5L524.14 186.9L524.22 188.9L524.30 198.6L524.38 205.4L524.46 196.0L524.53 187.1L524.61 201.7L524.69 202.3L524.77 206.3L524.85 201.5L524.93 192.0L525.00 208.8L525.08 190.6L525.16 199.5L525.24 183.8L525.32 198.9L525.40 189.3L525.47 209.3L525.55 182.8L525.63 200.0L525.71 201.6L525.79 187.9L525.87 199.2L525.94 210.7L526.02 194.4L526.10 195.0L526.18 201.0L526.26 205.1L526.34 213.0L526.42 186.8L526.49 204.9L526.57 197.1L526.65 205.5L526.73 207.4L526.81 197.9L526.89 208.6L526.96 191.2L527.04 212.9L527.12 194.5L527.20 189.8L527.28 204.9L527.36 198.6L527.43 192.0L527.51 204.8L527.59 202.9L527.67 202.5L527.75 181.0L527.83 208.2L527.90 202.4L527.98 204.9L528.06 205.8L528.14 208.8L528.22 206.8L528.30 199.1L528.37 189.8L528.45 187.1L528.53 211.0L528.61 209.1L528.69 201.1L528.77 209.1L528.84 207.9L528.92 202.8L529.00 205.9L529.08 208.3L529.16 198.5L529.24 207.9L529.31 203.2L529.39 197.4L529.47 193.1L529.55 198.6L529.63 190.3L529.71 199.2L529.78 212.1L529.86 188.0L529.94 180.4L530.02 192.1L530.10 187.2L530.18 190.2L530.25 204.8L530.33 194.1L530.41 207.1L530.49 206.0L530.57 194.7L530.65 199.8L530.73 206.8L530.80 211.7L530.88 192.2L530.96 200.7L531.04 199.2L531.12 208.5L531.20 207.9L531.27 201.2L531.35 214.4L531.43 189.5L531.51 200.5L531.59 190.2L531.67 191.0L531.74 205.9L531.82 195.3L531.90 209.9L531.98 208.7L532.06 188.8L532.14 205.6L532.21 207.8L532.29 195.7L532.37 200.5L532.45 190.9L532.53 210.8L532.61 203.0L532.68 209.6L532.76 200.4L532.84 203.2L532.92 208.8L533.00 213.6L533.08 211.3L533.15 191.2L533.23 204.1L533.31 209.7L533.39 198.8L533.47 209.9L533.55 191.2L533.62 191.6L533.70 200.3L533.78 206.0L533.86 214.2L533.94 195.5L534.02 184.8L534.09 198.6L534.17 205.6L534.25 192.2L534.33 204.2L534.41 210.5L534.49 201.7L534.56 194.3L534.64 214.2L534.72 190.5L534.80 187.0L534.88 200.9L534.96 205.1L535.04 211.7L535.11 194.9L535.19 203.2L535.27 189.5L535.35 187.4L535.43 189.3L535.51 198.8L535.58 214.1L535.66 188.8L535.74 205.1L535.82 205.1L535.90 190.3L535.98 195.6L536.05 209.4L536.13 203.7L536.21 203.3L536.29 202.0L536.37 210.2L536.45 187.8L536.52 201.9L536.60 193.7L536.68 190.4L536.76 184.0L536.84 192.9L536.92 207.3L536.99 204.7L537.07 191.5L537.15 186.8L537.23 211.9L537.31 185.4L537.39 205.8L537.46 202.4L537.54 204.6L537.62 194.3L537.70 202.4L537.78 201.0L537.86 208.7L537.93 188.0L538.01 196.8L538.09 201.0L538.17 184.2L538.25 193.7L538.33 188.5L538.40 203.1L538.48 199.1L538.56 202.0L538.64 191.5L538.72 197.5L538.80 213.3L538.87 194.5L538.95 202.6L539.03 197.9L539.11 190.9L539.19 203.1L539.27 193.8L539.34 200.4L539.42 201.4L539.50 205.2L539.58 201.6L539.66 203.4L539.74 192.2L539.82 217.0L539.89 194.5L539.97 235.6L540.05 209.4L540.13 192.2L540.21 200.9L540.29 194.6L540.36 188.6L540.44 198.2L540.52 212.6L540.60 212.7L540.68 201.1L540.76 210.3L540.83 184.1L540.91 201.4L540.99 213.9L541.07 216.2L541.15 205.5L541.23 217.7L541.30 195.4L541.38 217.0L541.46 191.4L541.54 205.0L541.62 190.0L541.70 210.1L541.77 204.7L541.85 190.1L541.93 212.8L542.01 193.4L542.09 188.0L542.17 209.1L542.24 201.9L542.32 186.7L542.40 187.8L542.48 186.9L542.56 201.4L542.64 203.9L542.71 202.1L542.79 204.0L542.87 191.7L542.95 191.6L543.03 195.0L543.11 206.8L543.18 192.1L543.26 195.2L543.34 198.0L543.42 189.3L543.50 203.9L543.58 199.1L543.65 190.0L543.73 207.4L543.81 191.3L543.89 192.6L543.97 187.6L544.05 188.8L544.13 205.7L544.20 185.9L544.28 204.7L544.36 210.2L544.44 203.0L544.52 203.6L544.60 208.4L544.67 190.7L544.75 195.0L544.83 193.8L544.91 211.3L544.99 185.8L545.07 195.4L545.14 189.6L545.22 196.6L545.30 196.4L545.38 192.2L545.46 198.6L545.54 188.3L545.61 205.1L545.69 215.2L545.77 203.7L545.85 200.5L545.93 196.0L546.01 199.3L546.08 195.8L546.16 195.6L546.24 201.9L546.32 194.5L546.40 194.4L546.48 207.5L546.55 213.5L546.63 198.0L546.71 195.0L546.79 190.1L546.87 189.9L546.95 197.2L547.02 189.6L547.10 205.6L547.18 204.6L547.26 188.5L547.34 210.1L547.42 200.5L547.49 209.2L547.57 210.2L547.65 184.1L547.73 213.6L547.81 186.0L547.89 204.5L547.96 207.2L548.04 212.9L548.12 197.9L548.20 193.7" fill="none" stroke="#76b900" stroke-width="1.45" stroke-linejoin="round"/><path d="M77.1 146.2 H548.7" fill="none" stroke="#848484" stroke-width="1"/><path d="M548.4000000000001 145.7 V359.8" fill="none" stroke="#a4a4a4" stroke-width="0.9"/><path d="M77.1 145.7 V359.8 H548.7" fill="none" stroke="#a6a6a6" stroke-width="1.1"/><path d="M74.3 359.80 H77.1" stroke="#c8c8c8" stroke-width="0.8" fill="none"/><path d="M74.3 335.68 H77.1" stroke="#c8c8c8" stroke-width="0.8" fill="none"/><path d="M74.3 311.56 H77.1" stroke="#c8c8c8" stroke-width="0.8" fill="none"/><path d="M74.3 287.44 H77.1" stroke="#c8c8c8" stroke-width="0.8" fill="none"/><path d="M74.3 263.32 H77.1" stroke="#c8c8c8" stroke-width="0.8" fill="none"/><path d="M74.3 239.20 H77.1" stroke="#c8c8c8" stroke-width="0.8" fill="none"/><path d="M74.3 215.08 H77.1" stroke="#c8c8c8" stroke-width="0.8" fill="none"/><path d="M74.3 190.96 H77.1" stroke="#c8c8c8" stroke-width="0.8" fill="none"/><path d="M74.3 166.84 H77.1" stroke="#c8c8c8" stroke-width="0.8" fill="none"/><path d="M126.30 359.8 V362.7" stroke="#c8c8c8" stroke-width="0.8" fill="none"/><path d="M204.93 359.8 V362.7" stroke="#c8c8c8" stroke-width="0.8" fill="none"/><path d="M283.56 359.8 V362.7" stroke="#c8c8c8" stroke-width="0.8" fill="none"/><path d="M362.19 359.8 V362.7" stroke="#c8c8c8" stroke-width="0.8" fill="none"/><path d="M440.82 359.8 V362.7" stroke="#c8c8c8" stroke-width="0.8" fill="none"/><path d="M519.45 359.8 V362.7" stroke="#c8c8c8" stroke-width="0.8" fill="none"/></svg>
<div class="rightpanel"></div>
<div class="btn sm" style="left:612.1px;top:127.70px;width:34px;height:10.5px"></div>
<div class="btn sm" style="left:612.1px;top:140.85px;width:34px;height:10.5px"></div>
<div class="btn sm" style="left:612.1px;top:154.00px;width:34px;height:10.5px"></div>
<div class="btn sm" style="left:612.1px;top:167.15px;width:34px;height:10.5px"></div>
<div class="btn sm" style="left:612.1px;top:180.30px;width:34px;height:10.5px"></div>
<div class="cb" style="left:611.7px;top:193.75px"><svg class="abs" style="left:0;top:0" width="6.5" height="6.2" viewBox="0 0 6.5 6.2"><path d="M1.6 3.2 L2.7 4.3 L4.9 1.9" stroke="#dbe7f5" stroke-width="0.7" fill="none" opacity=".35"/></svg></div>
<div class="cb" style="left:611.7px;top:203.00px"><svg class="abs" style="left:0;top:0" width="6.5" height="6.2" viewBox="0 0 6.5 6.2"><path d="M1.6 3.2 L2.7 4.3 L4.9 1.9" stroke="#dbe7f5" stroke-width="0.7" fill="none" opacity=".35"/></svg></div>
<div class="gb gb2" style="left:611.3px;top:301.4px;width:36.7px;height:85px"></div>
<div class="gbl" style="left:613.6px;top:298px;width:23.5px;height:7px"></div>
<div class="row" style="top:304.75px;background:#76b900"><div class="ck"><svg width="5" height="5" viewBox="0 0 5 5"><path d="M0.8 2.4 L2 3.7 L4.2 1" stroke="#111" stroke-width="0.9" fill="none"/></svg></div></div>
<div class="row" style="top:316.25px;background:#8dd3c7"><div class="ck"></div></div>
<div class="row" style="top:327.75px;background:#ffffb3"><div class="ck"></div></div>
<div class="row" style="top:339.25px;background:#bebada"><div class="ck"></div></div>
<div class="row" style="top:350.75px;background:#fb8072"><div class="ck"></div></div>
<div class="row" style="top:362.25px;background:#80b1d3"><div class="ck"></div></div>
<div class="row" style="top:373.75px;background:#fdb462"><div class="ck"></div></div>
<div class="status"></div>
<div class="sdiv" style="left:567.4px"></div><div class="sdiv" style="left:601px"></div>
<div class="frame"></div>
<span class="t" id="t0" style="left:14.00px;top:5.00px;font-size:6.7px;color:#3a3a3a;transform:scaleX(0.7692)">PCAT Utility v1.2</span>
<span class="t" id="t1" style="left:11.50px;top:20.00px;font-size:6.3px;color:#f0f0f0;transform:scaleX(0.7353)">TOTAL</span>
<span class="t" id="t2" style="left:18.40px;top:33.00px;font-size:20.8px;color:#fff;transform:scaleX(0.9171);font-family:'DejaVu Sans', 'Liberation Sans', sans-serif">128.107 W</span>
<span class="t" id="t3" style="left:68.30px;top:57.00px;font-size:8.0px;color:#fff;transform:scaleX(0.9130);font-family:'DejaVu Sans', 'Liberation Sans', sans-serif">102.763 (min)</span>
<span class="t" id="t4" style="left:68.30px;top:68.00px;font-size:8.0px;color:#fff;transform:scaleX(0.9022);font-family:'DejaVu Sans', 'Liberation Sans', sans-serif">153.975 (max)</span>
<span class="t" id="t5" style="left:68.30px;top:79.00px;font-size:8.0px;color:#fff;transform:scaleX(0.9188);font-family:'DejaVu Sans', 'Liberation Sans', sans-serif">130.185 (avg)</span>
<span class="t" id="t6" style="left:46.50px;top:93.00px;font-size:6.3px;color:#222;transform:scaleX(0.8810)">Reset Min/Max/Avg</span>
<span class="t" id="t7" style="left:144.90px;top:34.00px;font-size:6.3px;color:#fff;transform:scaleX(0.7240)">12V 8P1</span>
<span class="t" id="t8" style="left:155.40px;top:46.00px;font-size:11.0px;color:#fff;transform:scaleX(0.9870);font-family:'DejaVu Sans', 'Liberation Sans', sans-serif">12.024</span>
<span class="t" id="t9" style="left:198.90px;top:47.00px;font-size:7.7px;color:#fff;transform:scaleX(1.0635);font-family:'DejaVu Sans', 'Liberation Sans', sans-serif">V</span>
<span class="t" id="t10" style="left:161.80px;top:62.00px;font-size:11.0px;color:#fff;transform:scaleX(1.0032);font-family:'DejaVu Sans', 'Liberation Sans', sans-serif">8.056</span>
<span class="t" id="t11" style="left:198.90px;top:63.00px;font-size:7.7px;color:#fff;transform:scaleX(1.1015);font-family:'DejaVu Sans', 'Liberation Sans', sans-serif">A</span>
<span class="t" id="t12" style="left:155.40px;top:78.00px;font-size:11.0px;color:#fff;transform:scaleX(0.9870);font-family:'DejaVu Sans', 'Liberation Sans', sans-serif">96.865</span>
<span class="t" id="t13" style="left:198.90px;top:79.00px;font-size:7.7px;color:#fff;transform:scaleX(0.9988);font-family:'DejaVu Sans', 'Liberation Sans', sans-serif">W</span>
<span class="t" id="t14" style="left:221.07px;top:34.00px;font-size:6.3px;color:#fff;transform:scaleX(0.7240)">12V 8P2</span>
<span class="t" id="t15" style="left:231.57px;top:46.00px;font-size:11.0px;color:#fff;transform:scaleX(0.9870);font-family:'DejaVu Sans', 'Liberation Sans', sans-serif">12.176</span>
<span class="t" id="t16" style="left:275.07px;top:47.00px;font-size:7.7px;color:#fff;transform:scaleX(1.0635);font-family:'DejaVu Sans', 'Liberation Sans', sans-serif">V</span>
<span class="t" id="t17" style="left:237.97px;top:62.00px;font-size:11.0px;color:#fff;transform:scaleX(1.0032);font-family:'DejaVu Sans', 'Liberation Sans', sans-serif">0.000</span>
<span class="t" id="t18" style="left:275.07px;top:63.00px;font-size:7.7px;color:#fff;transform:scaleX(1.1015);font-family:'DejaVu Sans', 'Liberation Sans', sans-serif">A</span>
<span class="t" id="t19" style="left:237.97px;top:78.00px;font-size:11.0px;color:#fff;transform:scaleX(1.0032);font-family:'DejaVu Sans', 'Liberation Sans', sans-serif">0.000</span>
<span class="t" id="t20" style="left:275.07px;top:79.00px;font-size:7.7px;color:#fff;transform:scaleX(0.9988);font-family:'DejaVu Sans', 'Liberation Sans', sans-serif">W</span>
<span class="t" id="t21" style="left:297.24px;top:34.00px;font-size:6.3px;color:#fff;transform:scaleX(0.7240)">12V 8P3</span>
<span class="t" id="t22" style="left:307.74px;top:46.00px;font-size:11.0px;color:#fff;transform:scaleX(0.9870);font-family:'DejaVu Sans', 'Liberation Sans', sans-serif">12.216</span>
<span class="t" id="t23" style="left:351.24px;top:47.00px;font-size:7.7px;color:#fff;transform:scaleX(1.0635);font-family:'DejaVu Sans', 'Liberation Sans', sans-serif">V</span>
<span class="t" id="t24" style="left:314.14px;top:62.00px;font-size:11.0px;color:#fff;transform:scaleX(1.0032);font-family:'DejaVu Sans', 'Liberation Sans', sans-serif">0.000</span>
<span class="t" id="t25" style="left:351.24px;top:63.00px;font-size:7.7px;color:#fff;transform:scaleX(1.1015);font-family:'DejaVu Sans', 'Liberation Sans', sans-serif">A</span>
<span class="t" id="t26" style="left:314.14px;top:78.00px;font-size:11.0px;color:#fff;transform:scaleX(1.0032);font-family:'DejaVu Sans', 'Liberation Sans', sans-serif">0.000</span>
<span class="t" id="t27" style="left:351.24px;top:79.00px;font-size:7.7px;color:#fff;transform:scaleX(0.9988);font-family:'DejaVu Sans', 'Liberation Sans', sans-serif">W</span>
<span class="t" id="t28" style="left:373.41px;top:34.00px;font-size:6.3px;color:#fff;transform:scaleX(0.7232)">12V PCIE</span>
<span class="t" id="t29" style="left:383.91px;top:46.00px;font-size:11.0px;color:#fff;transform:scaleX(0.9870);font-family:'DejaVu Sans', 'Liberation Sans', sans-serif">12.080</span>
<span class="t" id="t30" style="left:427.41px;top:47.00px;font-size:7.7px;color:#fff;transform:scaleX(1.0635);font-family:'DejaVu Sans', 'Liberation Sans', sans-serif">V</span>
<span class="t" id="t31" style="left:390.31px;top:62.00px;font-size:11.0px;color:#fff;transform:scaleX(1.0032);font-family:'DejaVu Sans', 'Liberation Sans', sans-serif">2.584</span>
<span class="t" id="t32" style="left:427.41px;top:63.00px;font-size:7.7px;color:#fff;transform:scaleX(1.1015);font-family:'DejaVu Sans', 'Liberation Sans', sans-serif">A</span>
<span class="t" id="t33" style="left:383.91px;top:78.00px;font-size:11.0px;color:#fff;transform:scaleX(0.9870);font-family:'DejaVu Sans', 'Liberation Sans', sans-serif">31.215</span>
<span class="t" id="t34" style="left:427.41px;top:79.00px;font-size:7.7px;color:#fff;transform:scaleX(0.9988);font-family:'DejaVu Sans', 'Liberation Sans', sans-serif">W</span>
<span class="t" id="t35" style="left:449.58px;top:34.00px;font-size:6.3px;color:#fff;transform:scaleX(0.6786)">3.3V</span>
<span class="t" id="t36" style="left:466.48px;top:46.00px;font-size:11.0px;color:#fff;transform:scaleX(1.0032);font-family:'DejaVu Sans', 'Liberation Sans', sans-serif">3.336</span>
<span class="t" id="t37" style="left:503.58px;top:47.00px;font-size:7.7px;color:#fff;transform:scaleX(1.0635);font-family:'DejaVu Sans', 'Liberation Sans', sans-serif">V</span>
<span class="t" id="t38" style="left:466.48px;top:62.00px;font-size:11.0px;color:#fff;transform:scaleX(1.0032);font-family:'DejaVu Sans', 'Liberation Sans', sans-serif">0.008</span>
<span class="t" id="t39" style="left:503.58px;top:63.00px;font-size:7.7px;color:#fff;transform:scaleX(1.1015);font-family:'DejaVu Sans', 'Liberation Sans', sans-serif">A</span>
<span class="t" id="t40" style="left:466.48px;top:78.00px;font-size:11.0px;color:#fff;transform:scaleX(1.0032);font-family:'DejaVu Sans', 'Liberation Sans', sans-serif">0.027</span>
<span class="t" id="t41" style="left:503.58px;top:79.00px;font-size:7.7px;color:#fff;transform:scaleX(0.9988);font-family:'DejaVu Sans', 'Liberation Sans', sans-serif">W</span>
<span class="t" id="t42" style="left:525.75px;top:34.00px;font-size:6.3px;color:#fff;transform:scaleX(0.7616)">3.3V AUX</span>
<span class="t" id="t43" style="left:542.65px;top:46.00px;font-size:11.0px;color:#fff;transform:scaleX(1.0032);font-family:'DejaVu Sans', 'Liberation Sans', sans-serif">3.376</span>
<span class="t" id="t44" style="left:579.75px;top:47.00px;font-size:7.7px;color:#fff;transform:scaleX(1.0635);font-family:'DejaVu Sans', 'Liberation Sans', sans-serif">V</span>
<span class="t" id="t45" style="left:542.65px;top:62.00px;font-size:11.0px;color:#fff;transform:scaleX(1.0032);font-family:'DejaVu Sans', 'Liberation Sans', sans-serif">0.000</span>
<span class="t" id="t46" style="left:579.75px;top:63.00px;font-size:7.7px;color:#fff;transform:scaleX(1.1015);font-family:'DejaVu Sans', 'Liberation Sans', sans-serif">A</span>
<span class="t" id="t47" style="left:542.65px;top:78.00px;font-size:11.0px;color:#fff;transform:scaleX(1.0032);font-family:'DejaVu Sans', 'Liberation Sans', sans-serif">0.000</span>
<span class="t" id="t48" style="left:579.75px;top:79.00px;font-size:7.7px;color:#fff;transform:scaleX(0.9988);font-family:'DejaVu Sans', 'Liberation Sans', sans-serif">W</span>
<span class="t" id="t49" style="left:607.90px;top:41.00px;font-size:6.6px;color:#222;transform:scaleX(0.7634)">Reset PCAT</span>
<span class="t" id="t50" style="left:610.95px;top:60.00px;font-size:6.6px;color:#222;transform:scaleX(0.8033)">Log Data</span>
<span class="t" id="t51" style="left:608.20px;top:80.00px;font-size:6.6px;color:#222;transform:scaleX(0.8004)">Hide Graph</span>
<span class="t" id="t52" style="left:271.80px;top:134.00px;font-size:8.8px;color:#e6e6e6;transform:scaleX(0.8607)">PCI EXPRESS POWER</span>
<span class="t" id="t53" style="left:299.10px;top:374.00px;font-size:8.4px;color:#e6e6e6;transform:scaleX(0.9011)">Time (s)</span>
<span class="t" id="t54" style="left:55.20px;top:270.40px;font-size:8px;color:#e6e6e6;transform:rotate(-90deg) scale(0.9264,1) translate(0,-6.772px)">Power (W)</span>
<span class="t" id="t55" style="left:67.60px;top:356.00px;font-size:7.7px;color:#e6e6e6;transform:scaleX(0.9109)">0</span>
<span class="t" id="t56" style="left:63.60px;top:332.00px;font-size:7.7px;color:#e6e6e6;transform:scaleX(0.8409)">20</span>
<span class="t" id="t57" style="left:63.60px;top:308.00px;font-size:7.7px;color:#e6e6e6;transform:scaleX(0.8409)">40</span>
<span class="t" id="t58" style="left:63.60px;top:283.00px;font-size:7.7px;color:#e6e6e6;transform:scaleX(0.8409)">60</span>
<span class="t" id="t59" style="left:63.60px;top:259.00px;font-size:7.7px;color:#e6e6e6;transform:scaleX(0.8409)">80</span>
<span class="t" id="t60" style="left:60.40px;top:235.00px;font-size:7.7px;color:#e6e6e6;transform:scaleX(0.8029)">100</span>
<span class="t" id="t61" style="left:60.40px;top:211.00px;font-size:7.7px;color:#e6e6e6;transform:scaleX(0.8029)">120</span>
<span class="t" id="t62" style="left:60.40px;top:187.00px;font-size:7.7px;color:#e6e6e6;transform:scaleX(0.8029)">140</span>
<span class="t" id="t63" style="left:60.40px;top:163.00px;font-size:7.7px;color:#e6e6e6;transform:scaleX(0.8029)">160</span>
<span class="t" id="t64" style="left:118.10px;top:364.00px;font-size:7.7px;color:#e6e6e6;transform:scaleX(0.9585)">2100</span>
<span class="t" id="t65" style="left:196.73px;top:364.00px;font-size:7.7px;color:#e6e6e6;transform:scaleX(0.9585)">2200</span>
<span class="t" id="t66" style="left:275.36px;top:364.00px;font-size:7.7px;color:#e6e6e6;transform:scaleX(0.9585)">2300</span>
<span class="t" id="t67" style="left:353.99px;top:364.00px;font-size:7.7px;color:#e6e6e6;transform:scaleX(0.9585)">2400</span>
<span class="t" id="t68" style="left:432.62px;top:364.00px;font-size:7.7px;color:#e6e6e6;transform:scaleX(0.9585)">2500</span>
<span class="t" id="t69" style="left:511.25px;top:364.00px;font-size:7.7px;color:#e6e6e6;transform:scaleX(0.9585)">2600</span>
<span class="t" id="t70" style="left:614.30px;top:119.00px;font-size:6.3px;color:#f0f0f0;transform:scaleX(0.8685)">Plot Options</span>
<span class="t" id="t71" style="left:621.55px;top:130.00px;font-size:6.3px;color:#111;transform:scaleX(0.8350)">10 sec</span>
<span class="t" id="t72" style="left:622.80px;top:143.00px;font-size:6.3px;color:#111;transform:scaleX(0.8438)">1 min</span>
<span class="t" id="t73" style="left:621.05px;top:156.00px;font-size:6.3px;color:#111;transform:scaleX(0.8727)">10 min</span>
<span class="t" id="t74" style="left:621.55px;top:170.00px;font-size:6.3px;color:#111;transform:scaleX(0.8679)">1 hour</span>
<span class="t" id="t75" style="left:624.55px;top:183.00px;font-size:6.3px;color:#111;transform:scaleX(0.7979)">Max</span>
<span class="t" id="t76" style="left:620.40px;top:194.00px;font-size:6.3px;color:#f0f0f0;transform:scaleX(0.8672)">Auto scroll</span>
<span class="t" id="t77" style="left:620.40px;top:203.00px;font-size:6.3px;color:#f0f0f0;transform:scaleX(0.8264)">Auto scale</span>
<span class="t" id="t78" style="left:614.40px;top:299.00px;font-size:6.3px;color:#f0f0f0;transform:scaleX(0.8415)">Plot Data</span>
<span class="t" id="t79" style="left:623.20px;top:308.00px;font-size:6.3px;color:#222;transform:scaleX(0.7607)">TOTAL</span>
<span class="t" id="t80" style="left:623.20px;top:319.00px;font-size:6.3px;color:#222;transform:scaleX(0.7240)">12V 8P1</span>
<span class="t" id="t81" style="left:623.20px;top:331.00px;font-size:6.3px;color:#222;transform:scaleX(0.7240)">12V 8P2</span>
<span class="t" id="t82" style="left:623.20px;top:342.00px;font-size:6.3px;color:#222;transform:scaleX(0.7240)">12V 8P3</span>
<span class="t" id="t83" style="left:623.20px;top:354.00px;font-size:6.3px;color:#222;transform:scaleX(0.7340)">12V PCIE</span>
<span class="t" id="t84" style="left:623.20px;top:365.00px;font-size:6.3px;color:#222;transform:scaleX(0.6554)">3.3V</span>
<span class="t" id="t85" style="left:623.20px;top:377.00px;font-size:6.3px;color:#222;transform:scaleX(0.7762)">3.3V AUX</span>
<span class="t" id="t86" style="left:6.20px;top:392.00px;font-size:6.3px;color:#dcdcdc;transform:scaleX(0.8212)">PCAT 800 connected, FW v0.8</span>
<span class="t" id="t87" style="left:573.90px;top:392.00px;font-size:6.3px;color:#dcdcdc;transform:scaleX(0.8244)">dt: 100ms</span>
<span class="t" id="t88" style="left:607.80px;top:392.00px;font-size:6.3px;color:#dcdcdc;transform:scaleX(0.8141)">Data Backlog: 1</span>
</div></body></html>
